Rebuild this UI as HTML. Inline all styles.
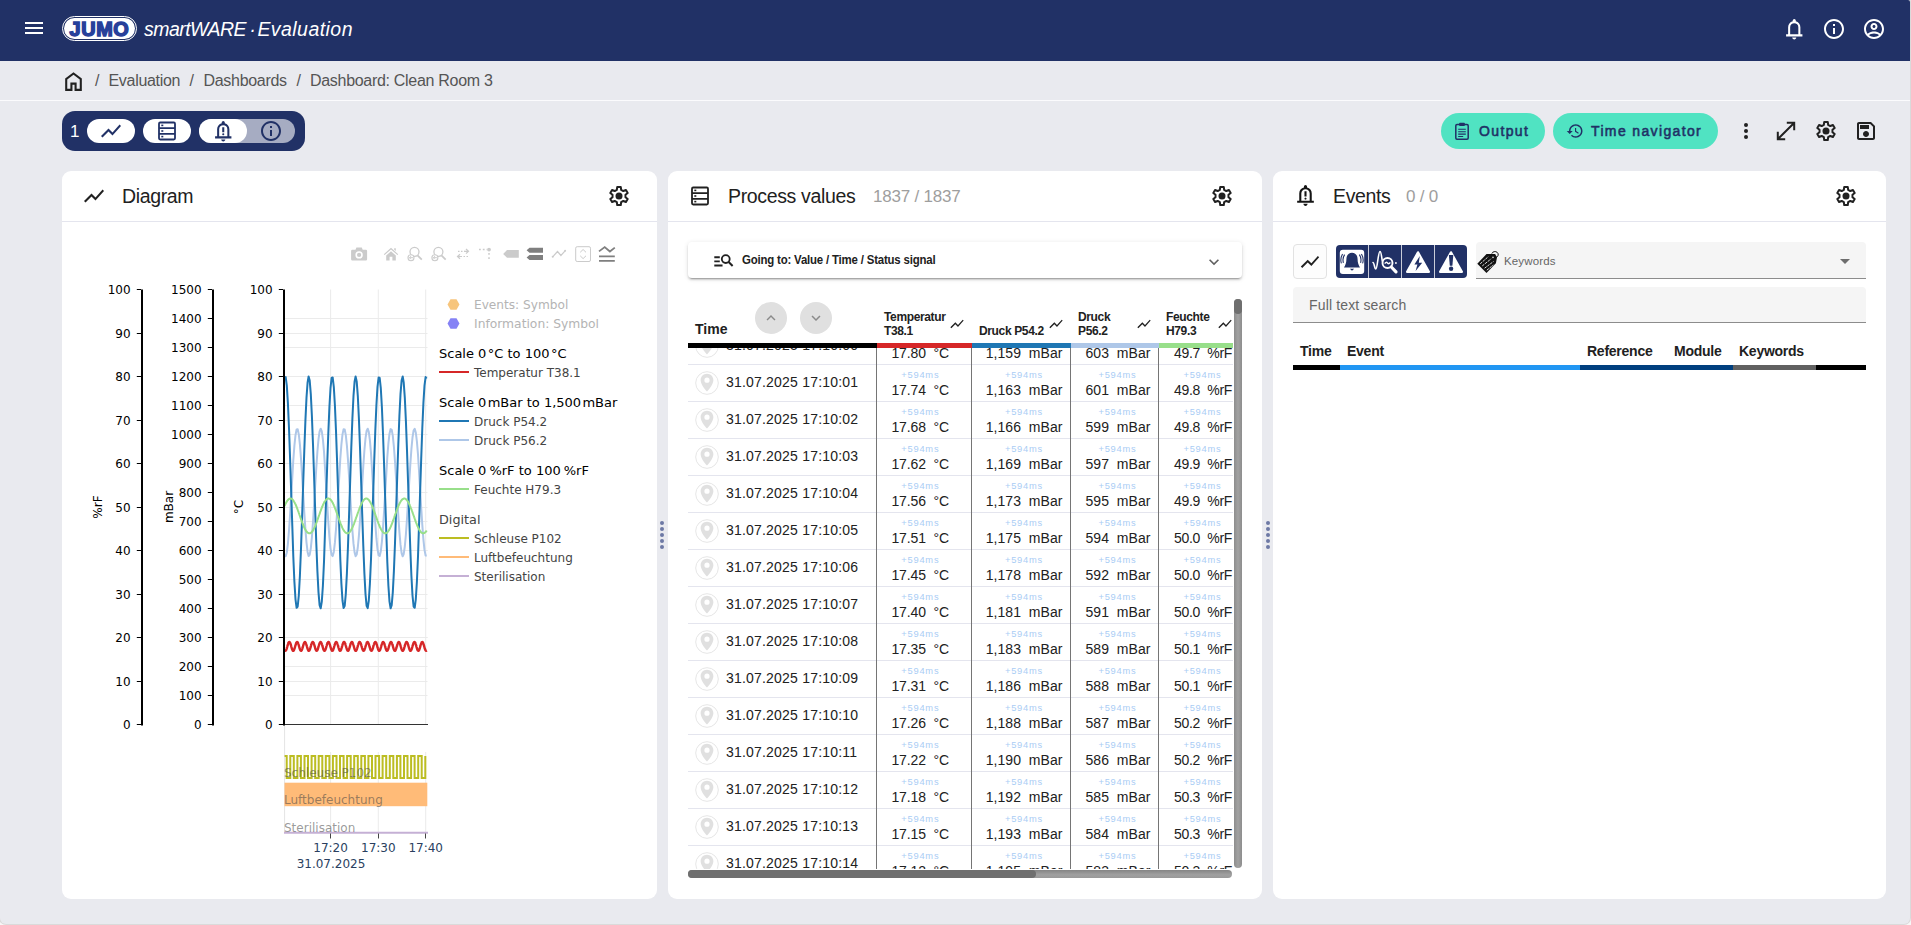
<!DOCTYPE html>
<html lang="en"><head><meta charset="utf-8"><title>JUMO smartWARE Evaluation</title>
<style>

*{box-sizing:border-box;margin:0;padding:0}
html,body{width:1911px;height:925px;overflow:hidden;background:#f7f7f7}
body{font-family:"Liberation Sans",sans-serif;color:#212121;position:relative}
#app{position:absolute;left:0;top:0;width:1910px;height:924px;background:#e9eaef;border-radius:0 2px 6px 6px;overflow:hidden}
#frame{position:absolute;left:-1px;top:-1px;width:1912px;height:926px;border-radius:0 3px 7px 7px;background:#dadada}
.abs{position:absolute}
.ic{position:absolute;display:block}
#hdr{position:absolute;left:0;top:0;width:1910px;height:61px;background:#213166}
#logo{position:absolute;left:62px;top:16px;width:75px;height:25px;border-radius:13px;border:1px solid #fff;background:#213166}
#logo i{position:absolute;left:1px;top:1px;right:1px;bottom:1px;border-radius:11px;background:#fff}
#logo b{position:absolute;left:0;top:0.5px;width:73px;height:23px;line-height:23px;text-align:center;color:#27409a;font-weight:bold;font-size:19.5px;letter-spacing:0.6px;-webkit-text-stroke:1.4px #27409a;transform:scaleX(1.02)}
.brand{position:absolute;left:144px;top:16px;height:26px;line-height:26px;color:#fff;font-style:italic;font-size:19.5px;white-space:nowrap;letter-spacing:-0.2px}
#crumb{position:absolute;left:0;top:61px;width:1910px;height:39px}
#crumb span{position:absolute;top:0;height:39px;line-height:39px;font-size:16px;color:#555;white-space:nowrap;letter-spacing:-0.3px}
#wline{position:absolute;left:0;top:100px;width:1910px;height:1px;background:#fbfbfd}
#pill{position:absolute;left:62px;top:111px;width:243px;height:40px;border-radius:13px;background:#213166}
#pill .n{position:absolute;left:8px;top:1px;height:40px;line-height:40px;color:#fff;font-size:17px}
#pill .t{position:absolute;top:8px;height:24px;border-radius:12px;background:#fff;color:#213166}
.btn{position:absolute;top:113px;height:36px;border-radius:18px;background:#50e3c2;color:#213166;font-size:14px;font-weight:normal;-webkit-text-stroke:0.55px #213166;letter-spacing:1.36px;line-height:36px;white-space:nowrap}
.card{position:absolute;top:171px;height:728px;background:#fff;border-radius:9px}
.card .hd{position:absolute;left:0;top:0;right:0;height:51px;border-bottom:1px solid #e4e5ee}
.card .ttl{position:absolute;top:0;height:50px;line-height:50px;font-size:19.500px;letter-spacing:-0.35px;color:#212121;white-space:nowrap}
.card .cnt{position:absolute;top:0;height:50px;line-height:51px;font-size:17px;letter-spacing:-0.2px;color:#9e9e9e;white-space:nowrap}
.grip{position:absolute;top:521px;width:4px;height:28px}
.grip i{position:absolute;left:0;width:4px;height:4px;border-radius:2px;background:#6d79a5}

.pg{position:absolute;width:1911px;height:925px}
.xp{position:absolute;background:#fff;border-radius:4px;box-shadow:0 3px 1px -2px rgba(0,0,0,.2),0 2px 2px 0 rgba(0,0,0,.14),0 1px 5px 0 rgba(0,0,0,.12)}
.xt{height:36px;line-height:37.6px;font-size:12.700px;font-weight:bold;color:#212121;white-space:nowrap;letter-spacing:-0.2px;transform:scaleX(0.9);transform-origin:0 50%}
.th14{font-size:14px;font-weight:bold;line-height:18px;color:#212121;white-space:nowrap}
.th12{font-size:12px;font-weight:bold;line-height:14px;color:#212121;white-space:nowrap;letter-spacing:-0.36px}
.cb{width:32px;height:32px;border-radius:16px;background:#e0e0e0}
.row{position:absolute;left:0;width:545px;height:37px;border-bottom:1px solid #e4e5ee}
.ts{height:36px;line-height:36px;font-size:14px;color:#212121;white-space:nowrap;letter-spacing:0.2px}
.ms{width:60px;text-align:center;font-size:9.300px;line-height:11px;color:#aacdf5;white-space:nowrap;letter-spacing:0.8px}
.val{font-size:14px;line-height:18px;color:#212121;white-space:nowrap;letter-spacing:-0.1px}

</style></head><body>
<div id="frame"></div>
<div id="app">

<div id="hdr">
<svg class="ic" viewBox="0 0 24 24" style="width:24px;height:24px;color:#fff;left:22px;top:16px" fill="currentColor"><path d="M3 18h18v-2H3v2zm0-5h18v-2H3v2zm0-7v2h18V6H3z"/></svg>
<div id="logo"><i></i><b>JUMO</b></div>
<div class="brand" style="letter-spacing:-0.55px">smartWARE</div><div class="brand" style="left:249.2px;letter-spacing:0">&middot;</div><div class="brand" style="left:257.4px;letter-spacing:0.45px">Evaluation</div>
<svg class="ic" viewBox="0 0 24 24" style="width:24.5px;height:24.5px;color:#fff;left:1781.700px;top:16.900px" fill="currentColor"><path d="M4 19v-2h2v-7q0-2.075 1.250-3.688T10.500 4.200V3.500q0-.625.438-1.062T12 2q.625 0 1.063.438T13.500 3.500v.700q2 .500 3.250 2.113T18 10v7h2v2H4Zm8 3q-.825 0-1.412-.587T10 20h4q0 .825-.587 1.413T12 22Zm-4-5h8v-7q0-1.650-1.175-2.825T12 6q-1.650 0-2.825 1.175T8 10v7Z"/></svg><svg class="ic" viewBox="0 0 24 24" style="width:24px;height:24px;color:#fff;left:1822px;top:17px" fill="currentColor"><path d="M11 7h2v2h-2zm0 4h2v6h-2zm1-9C6.480 2 2 6.480 2 12s4.480 10 10 10 10-4.480 10-10S17.520 2 12 2zm0 18c-4.410 0-8-3.590-8-8s3.590-8 8-8 8 3.590 8 8-3.590 8-8 8z"/></svg><svg class="ic" viewBox="0 0 24 24" style="width:24px;height:24px;color:#fff;left:1862px;top:17px" fill="currentColor"><path d="M12 2C6.480 2 2 6.480 2 12s4.480 10 10 10 10-4.480 10-10S17.520 2 12 2zM7.070 18.280c.430-.900 3.050-1.780 4.930-1.780s4.510.880 4.930 1.780C15.570 19.360 13.860 20 12 20s-3.570-.640-4.930-1.720zm11.290-1.450c-1.430-1.740-4.900-2.330-6.360-2.330s-4.930.590-6.360 2.330C4.620 15.490 4 13.820 4 12c0-4.410 3.590-8 8-8s8 3.590 8 8c0 1.820-.620 3.490-1.640 4.830zM12 6c-1.940 0-3.500 1.560-3.500 3.500S10.060 13 12 13s3.500-1.560 3.500-3.500S13.940 6 12 6zm0 5c-.830 0-1.500-.670-1.500-1.500S11.170 8 12 8s1.500.670 1.500 1.500S12.830 11 12 11z"/></svg>
</div>

<div id="crumb">
<svg class="ic" viewBox="0 0 24 24" style="width:25px;height:25px;color:#212121;left:61px;top:7.500px" fill="currentColor"><path d="M6 19h3v-6h6v6h3v-9l-6-4.500L6 10v9zm-2 2V9l8-6 8 6v12h-7v-6h-2v6H4z"/></svg>
<span style="left:95px">/</span><span style="left:108.500px">Evaluation</span>
<span style="left:189.500px">/</span><span style="left:203.500px">Dashboards</span>
<span style="left:296.500px">/</span><span style="left:310px">Dashboard: Clean Room 3</span>
</div>
<div id="wline"></div>

<div id="pill"><span class="n">1</span>
<div class="t" style="left:25px;width:48px"><svg class="ic" viewBox="0 0 24 24" style="width:24px;height:24px;left:12px;top:0" fill="currentColor"><path d="M3.5 18.490l6-6.010 4 4L22 6.920l-1.410-1.410-7.090 7.970-4-4L2 16.990z"/></svg></div>
<div class="t" style="left:81px;width:48px"><svg class="ic" viewBox="0 0 24 24" style="width:24px;height:24px;left:12px;top:0" fill="currentColor"><rect x="4" y="3.500" width="16" height="17" rx="1.200" fill="none" stroke="currentColor" stroke-width="1.800"/><path d="M4 9.200h16M4 14.800h16" fill="none" stroke="currentColor" stroke-width="1.800"/><rect x="6.300" y="5.600" width="2" height="1.600"/><rect x="6.300" y="11.200" width="2" height="1.600"/><rect x="6.300" y="16.800" width="2" height="1.600"/></svg></div>
<div class="t" style="left:137px;width:96px;background:rgba(255,255,255,.6)"><div class="t" style="left:0;top:0;width:48px"><svg class="ic" viewBox="0 0 24 24" style="width:24.5px;height:24.5px;left:11.800px;top:0" fill="currentColor"><path d="M4 19v-2h2v-7q0-2.075 1.250-3.688T10.500 4.200V3.500q0-.625.438-1.062T12 2q.625 0 1.063.438T13.500 3.500v.700q2 .500 3.250 2.113T18 10v7h2v2H4Zm8 3q-.825 0-1.412-.587T10 20h4q0 .825-.587 1.413T12 22Zm-4-5h8v-7q0-1.650-1.175-2.825T12 6q-1.650 0-2.825 1.175T8 10v7Zm3-4h2V8h-2v5Zm1 3q.425 0 .713-.288T13 15q0-.425-.288-.713T12 14q-.425 0-.713.288T11 15q0 .425.288.713T12 16Z"/></svg></div><svg class="ic" viewBox="0 0 24 24" style="width:24px;height:24px;left:60px;top:0" fill="currentColor"><path d="M11 7h2v2h-2zm0 4h2v6h-2zm1-9C6.480 2 2 6.480 2 12s4.480 10 10 10 10-4.480 10-10S17.520 2 12 2zm0 18c-4.410 0-8-3.590-8-8s3.590-8 8-8 8 3.590 8 8-3.590 8-8 8z"/></svg></div>
</div>

<div class="btn" style="left:1441px;width:104px"><svg class="ic" viewBox="0 0 14 18" style="left:14px;top:9px;width:14px;height:18px" fill="none" stroke="currentColor"><rect x="0.800" y="2.600" width="12.400" height="14.600" rx="1.200" stroke-width="1.500"/><rect x="4.200" y="0.700" width="5.600" height="3.200" rx="0.600" fill="currentColor" stroke="none"/><path d="M3.200 7.300h7.600M3.200 9.700h7.600M3.200 12.100h7.600M3.200 14.500h5" stroke-width="1.100"/></svg><span class="abs" style="left:38px">Output</span></div>
<div class="btn" style="left:1553px;width:165px"><svg class="ic" viewBox="0 0 24 24" style="width:18px;height:18px;left:12.500px;top:9px" fill="currentColor"><path d="M13 3c-4.970 0-9 4.030-9 9H1l3.890 3.890.070.140L9 12H6c0-3.870 3.130-7 7-7s7 3.130 7 7-3.130 7-7 7c-1.930 0-3.680-.790-4.940-2.060l-1.420 1.420C8.270 19.990 10.510 21 13 21c4.970 0 9-4.030 9-9s-4.030-9-9-9zm-1 5v5l4.250 2.520.770-1.280-3.520-2.090V8z"/></svg><span class="abs" style="left:38px">Time navigator</span></div>
<svg class="ic" viewBox="0 0 24 24" style="width:24px;height:24px;color:#212121;left:1734px;top:119px" fill="currentColor"><circle cx="12" cy="6" r="2"/><circle cx="12" cy="12" r="2"/><circle cx="12" cy="18" r="2"/></svg><svg class="ic" viewBox="0 0 24 24" style="width:24px;height:24px;color:#212121;left:1774px;top:119px" fill="currentColor"><path d="M12.800 3.800H20.200V11.200M3.800 12.800V20.200H11.200M19.800 4.200L4.200 19.800" fill="none" stroke="currentColor" stroke-width="2"/></svg><svg class="ic" viewBox="0 0 24 24" style="width:24px;height:24px;color:#212121;left:1814px;top:119px" fill="currentColor"><path d="M14.15 5.76L13.76 2.97L10.24 2.97L9.85 5.76L7.67 7.02L5.06 5.96L3.30 9.00L5.52 10.74L5.52 13.26L3.30 15.00L5.06 18.04L7.67 16.98L9.85 18.24L10.24 21.03L13.76 21.03L14.15 18.24L16.33 16.98L18.94 18.04L20.70 15.00L18.48 13.26L18.48 10.74L20.70 9.00L18.94 5.96L16.33 7.02Z" fill="none" stroke="currentColor" stroke-width="2" stroke-linejoin="round"/><circle cx="12" cy="12" r="3.500"/></svg><svg class="ic" viewBox="0 0 24 24" style="width:24px;height:24px;color:#212121;left:1854px;top:119px" fill="currentColor"><path d="M17 3H5c-1.110 0-2 .900-2 2v14c0 1.100.890 2 2 2h14c1.100 0 2-.900 2-2V7l-4-4zm2 16H5V5h11.170L19 7.830V19zm-7-7c-1.660 0-3 1.340-3 3s1.340 3 3 3 3-1.340 3-3-1.340-3-3-3zM6 6h9v4H6z"/></svg>

<div class="card" id="c1" style="left:62px;width:595px">
<div class="hd"><svg class="ic" viewBox="0 0 24 24" style="width:24px;height:24px;color:#212121;left:20px;top:13px" fill="currentColor"><path d="M3.5 18.490l6-6.010 4 4L22 6.920l-1.410-1.410-7.090 7.970-4-4L2 16.990z"/></svg><span class="ttl" style="left:60px">Diagram</span><svg class="ic" viewBox="0 0 24 24" style="width:24px;height:24px;color:#212121;left:545px;top:13px" fill="currentColor"><path d="M14.15 5.76L13.76 2.97L10.24 2.97L9.85 5.76L7.67 7.02L5.06 5.96L3.30 9.00L5.52 10.74L5.52 13.26L3.30 15.00L5.06 18.04L7.67 16.98L9.85 18.24L10.24 21.03L13.76 21.03L14.15 18.24L16.33 16.98L18.94 18.04L20.70 15.00L18.48 13.26L18.48 10.74L20.70 9.00L18.94 5.96L16.33 7.02Z" fill="none" stroke="currentColor" stroke-width="2" stroke-linejoin="round"/><circle cx="12" cy="12" r="3.500"/></svg></div>
<svg class="abs" style="left:0;top:0;width:595px;height:728px" viewBox="62 171 595 728" font-family="'DejaVu Sans',Verdana,sans-serif" font-size="12">
<path d="M285 695.5H427.5M285 666.5H427.5M285 637.5H427.5M285 608.5H427.5M285 579.5H427.5M285 550.5H427.5M285 521.5H427.5M285 492.5H427.5M285 463.5H427.5M285 434.5H427.5M285 405.5H427.5M285 376.5H427.5M285 347.5H427.5M285 318.5H427.5M285 681.5H427.5M285 637.5H427.5M285 594.5H427.5M285 550.5H427.5M285 507.5H427.5M285 463.5H427.5M285 420.5H427.5M285 376.5H427.5M285 333.5H427.5" stroke="#ebebeb" stroke-width="1" fill="none"/>
<path d="M330.6 289.5V724.5M330.6 752V833M378.3 289.5V724.5M378.3 752V833M425.7 289.5V724.5M425.7 752V833" stroke="#ebebeb" stroke-width="1" fill="none"/>
<path d="M284.6 724V833" stroke="#e4e4e4" stroke-width="1" fill="none"/>
<path d="M284.6 554.5L285.7 556.2L286.8 552.5L287.9 543.8L289.0 530.6L290.1 514.2L291.2 496.0L292.3 477.4L293.3 460.2L294.4 445.7L295.5 435.2L296.6 429.5L297.7 429.3L298.8 434.4L299.9 444.4L301.0 458.6L302.1 475.6L303.2 494.1L304.3 512.5L305.4 529.1L306.5 542.6L307.6 551.9L308.6 556.1L309.7 554.9L310.8 548.3L311.9 537.1L313.0 522.0L314.1 504.4L315.2 485.8L316.3 467.8L317.4 451.8L318.5 439.4L319.6 431.4L320.7 428.7L321.8 431.4L322.9 439.3L324.0 451.7L325.0 467.6L326.1 485.7L327.2 504.3L328.3 521.9L329.4 537.0L330.5 548.3L331.6 554.8L332.7 556.1L333.8 551.9L334.9 542.7L336.0 529.2L337.1 512.6L338.2 494.2L339.3 475.8L340.3 458.7L341.4 444.5L342.5 434.4L343.6 429.3L344.7 429.5L345.8 435.1L346.9 445.6L348.0 460.1L349.1 477.3L350.2 495.9L351.3 514.1L352.4 530.5L353.5 543.7L354.6 552.5L355.6 556.2L356.7 554.5L357.8 547.5L358.9 535.8L360.0 520.4L361.1 502.7L362.2 484.0L363.3 466.1L364.4 450.5L365.5 438.4L366.6 431.0L367.7 428.7L368.8 431.9L369.9 440.3L371.0 453.1L372.0 469.3L373.1 487.4L374.2 506.0L375.3 523.4L376.4 538.2L377.5 549.1L378.6 555.2L379.7 555.9L380.8 551.3L381.9 541.6L383.0 527.8L384.1 510.9L385.2 492.5L386.3 474.1L387.3 457.2L388.4 443.4L389.5 433.7L390.6 429.1L391.7 429.8L392.8 435.9L393.9 446.8L395.0 461.6L396.1 479.0L397.2 497.6L398.3 515.8L399.4 531.9L400.5 544.7L401.6 553.1L402.7 556.3L403.7 554.0L404.8 546.6L405.9 534.5L407.0 518.8L408.1 500.9L409.2 482.3L410.3 464.6L411.4 449.2L412.5 437.5L413.6 430.5L414.7 428.8L415.8 432.5L416.9 441.3L418.0 454.5L419.0 470.9L420.1 489.2L421.2 507.7L422.3 524.9L423.4 539.4L424.5 549.9L425.6 555.5L426.7 555.7" stroke="#aec7e8" stroke-width="2" fill="none" stroke-linejoin="round"/>
<path d="M284.6 378.5L285.7 377.1L286.8 385.6L287.9 403.1L289.0 428.3L290.1 458.9L291.2 492.4L292.3 525.9L293.3 556.5L294.4 581.7L295.5 599.3L296.6 607.8L297.7 606.5L298.8 595.5L299.9 575.7L301.0 548.8L302.1 517.1L303.2 483.3L304.3 450.4L305.4 420.9L306.5 397.6L307.6 382.4L308.6 376.5L309.7 380.6L310.8 394.1L311.9 416.0L313.0 444.5L314.1 477.0L315.2 510.9L316.3 543.2L317.4 571.1L318.5 592.4L319.6 605.2L320.7 608.3L321.8 601.6L322.9 585.7L324.0 561.7L325.0 531.9L326.1 498.7L327.2 465.0L328.3 433.7L329.4 407.3L330.5 388.2L331.6 378.0L332.7 377.5L333.8 386.8L334.9 405.2L336.0 430.9L337.1 461.9L338.2 495.6L339.3 528.9L340.3 559.2L341.4 583.7L342.5 600.5L343.6 608.1L344.7 605.9L345.8 594.0L346.9 573.4L348.0 546.0L349.1 514.0L350.2 480.2L351.3 447.4L352.4 418.5L353.5 395.8L354.6 381.4L355.6 376.5L356.7 381.4L357.8 395.8L358.9 418.5L360.0 447.4L361.1 480.2L362.2 514.0L363.3 546.0L364.4 573.4L365.5 594.0L366.6 605.9L367.7 608.1L368.8 600.5L369.9 583.7L371.0 559.2L372.0 528.9L373.1 495.6L374.2 461.9L375.3 430.9L376.4 405.2L377.5 386.8L378.6 377.5L379.7 378.0L380.8 388.2L381.9 407.3L383.0 433.7L384.1 465.0L385.2 498.7L386.3 531.9L387.3 561.7L388.4 585.7L389.5 601.6L390.6 608.3L391.7 605.2L392.8 592.4L393.9 571.1L395.0 543.2L396.1 510.9L397.2 477.0L398.3 444.5L399.4 416.0L400.5 394.1L401.6 380.6L402.7 376.5L403.7 382.4L404.8 397.6L405.9 420.9L407.0 450.4L408.1 483.3L409.2 517.1L410.3 548.8L411.4 575.7L412.5 595.5L413.6 606.5L414.7 607.8L415.8 599.3L416.9 581.7L418.0 556.5L419.0 525.9L420.1 492.4L421.2 458.9L422.3 428.3L423.4 403.1L424.5 385.6L425.6 377.1L426.7 378.5" stroke="#1f77b4" stroke-width="2" fill="none" stroke-linejoin="round"/>
<path d="M284.6 505.9L284.8 505.6L284.9 505.2L285.1 504.9L285.2 504.5L285.4 504.2L285.5 503.8L285.7 503.5L285.9 503.2L286.0 502.9L286.2 502.6L286.3 502.3L286.5 502.0L286.7 501.8L286.8 501.5L287.0 501.3L287.1 501.0L287.3 500.8L287.4 500.6L287.6 500.4L287.8 500.2L287.9 500.0L288.1 499.8L288.2 499.6L288.4 499.5L288.5 499.3L288.7 499.2L288.9 499.1L289.0 499.0L289.2 498.9L289.3 498.8L289.5 498.7L289.7 498.7L289.8 498.6L290.0 498.6L290.1 498.5L290.3 498.5L290.4 498.5L290.6 498.5L290.8 498.5L290.9 498.6L291.1 498.6L291.2 498.7L291.4 498.8L291.5 498.8L291.7 498.9L291.9 499.0L292.0 499.1L292.2 499.3L292.3 499.4L292.5 499.6L292.7 499.7L292.8 499.9L293.0 500.1L293.1 500.3L293.3 500.5L293.4 500.7L293.6 500.9L293.8 501.1L293.9 501.4L294.1 501.6L294.2 501.9L294.4 502.2L294.5 502.5L294.7 502.8L294.9 503.1L295.0 503.4L295.2 503.7L295.3 504.0L295.5 504.3L295.7 504.7L295.8 505.0L296.0 505.4L296.1 505.8L296.3 506.1L296.4 506.5L296.6 506.9L296.8 507.3L296.9 507.7L297.1 508.1L297.2 508.5L297.4 508.9L297.5 509.3L297.7 509.8L297.9 510.2L298.0 510.6L298.2 511.1L298.3 511.5L298.5 511.9L298.7 512.4L298.8 512.8L299.0 513.3L299.1 513.7L299.3 514.2L299.4 514.6L299.6 515.1L299.8 515.5L299.9 516.0L300.1 516.5L300.2 516.9L300.4 517.4L300.5 517.8L300.7 518.3L300.9 518.7L301.0 519.2L301.2 519.6L301.3 520.1L301.5 520.5L301.7 520.9L301.8 521.4L302.0 521.8L302.1 522.2L302.3 522.6L302.4 523.1L302.6 523.5L302.8 523.9L302.9 524.3L303.1 524.7L303.2 525.1L303.4 525.4L303.5 525.8L303.7 526.2L303.9 526.6L304.0 526.9L304.2 527.3L304.3 527.6L304.5 527.9L304.7 528.3L304.8 528.6L305.0 528.9L305.1 529.2L305.3 529.5L305.4 529.8L305.6 530.0L305.8 530.3L305.9 530.5L306.1 530.8L306.2 531.0L306.4 531.2L306.5 531.4L306.7 531.6L306.9 531.8L307.0 532.0L307.2 532.2L307.3 532.3L307.5 532.5L307.7 532.6L307.8 532.7L308.0 532.8L308.1 532.9L308.3 533.0L308.4 533.1L308.6 533.2L308.8 533.2L308.9 533.3L309.1 533.3L309.2 533.3L309.4 533.3L309.5 533.3L309.7 533.3L309.9 533.3L310.0 533.2L310.2 533.2L310.3 533.1L310.5 533.0L310.7 532.9L310.8 532.8L311.0 532.7L311.1 532.6L311.3 532.5L311.4 532.3L311.6 532.2L311.8 532.0L311.9 531.8L312.1 531.6L312.2 531.4L312.4 531.2L312.5 531.0L312.7 530.7L312.9 530.5L313.0 530.2L313.2 530.0L313.3 529.7L313.5 529.4L313.7 529.1L313.8 528.8L314.0 528.5L314.1 528.2L314.3 527.9L314.4 527.5L314.6 527.2L314.8 526.9L314.9 526.5L315.1 526.1L315.2 525.8L315.4 525.4L315.5 525.0L315.7 524.6L315.9 524.2L316.0 523.8L316.2 523.4L316.3 523.0L316.5 522.6L316.7 522.1L316.8 521.7L317.0 521.3L317.1 520.9L317.3 520.4L317.4 520.0L317.6 519.5L317.8 519.1L317.9 518.6L318.1 518.2L318.2 517.7L318.4 517.3L318.5 516.8L318.7 516.4L318.9 515.9L319.0 515.5L319.2 515.0L319.3 514.6L319.5 514.1L319.7 513.7L319.8 513.2L320.0 512.8L320.1 512.3L320.3 511.9L320.4 511.4L320.6 511.0L320.8 510.6L320.9 510.1L321.1 509.7L321.2 509.3L321.4 508.9L321.5 508.4L321.7 508.0L321.9 507.6L322.0 507.2L322.2 506.8L322.3 506.5L322.5 506.1L322.7 505.7L322.8 505.3L323.0 505.0L323.1 504.6L323.3 504.3L323.4 504.0L323.6 503.6L323.8 503.3L323.9 503.0L324.1 502.7L324.2 502.4L324.4 502.1L324.5 501.9L324.7 501.6L324.9 501.3L325.0 501.1L325.2 500.9L325.3 500.6L325.5 500.4L325.7 500.2L325.8 500.0L326.0 499.9L326.1 499.7L326.3 499.5L326.4 499.4L326.6 499.2L326.8 499.1L326.9 499.0L327.1 498.9L327.2 498.8L327.4 498.7L327.5 498.7L327.7 498.6L327.9 498.6L328.0 498.5L328.2 498.5L328.3 498.5L328.5 498.5L328.7 498.5L328.8 498.6L329.0 498.6L329.1 498.7L329.3 498.7L329.4 498.8L329.6 498.9L329.8 499.0L329.9 499.1L330.1 499.2L330.2 499.4L330.4 499.5L330.5 499.7L330.7 499.8L330.9 500.0L331.0 500.2L331.2 500.4L331.3 500.6L331.5 500.8L331.7 501.1L331.8 501.3L332.0 501.5L332.1 501.8L332.3 502.1L332.4 502.4L332.6 502.6L332.8 502.9L332.9 503.3L333.1 503.6L333.2 503.9L333.4 504.2L333.5 504.6L333.7 504.9L333.9 505.3L334.0 505.6L334.2 506.0L334.3 506.4L334.5 506.8L334.7 507.2L334.8 507.6L335.0 508.0L335.1 508.4L335.3 508.8L335.4 509.2L335.6 509.6L335.8 510.0L335.9 510.5L336.1 510.9L336.2 511.3L336.4 511.8L336.5 512.2L336.7 512.7L336.9 513.1L337.0 513.6L337.2 514.0L337.3 514.5L337.5 514.9L337.7 515.4L337.8 515.8L338.0 516.3L338.1 516.7L338.3 517.2L338.4 517.7L338.6 518.1L338.8 518.6L338.9 519.0L339.1 519.4L339.2 519.9L339.4 520.3L339.5 520.8L339.7 521.2L339.9 521.6L340.0 522.1L340.2 522.5L340.3 522.9L340.5 523.3L340.7 523.7L340.8 524.1L341.0 524.5L341.1 524.9L341.3 525.3L341.4 525.7L341.6 526.1L341.8 526.4L341.9 526.8L342.1 527.1L342.2 527.5L342.4 527.8L342.5 528.1L342.7 528.5L342.9 528.8L343.0 529.1L343.2 529.4L343.3 529.7L343.5 529.9L343.7 530.2L343.8 530.5L344.0 530.7L344.1 530.9L344.3 531.2L344.4 531.4L344.6 531.6L344.8 531.8L344.9 531.9L345.1 532.1L345.2 532.3L345.4 532.4L345.5 532.6L345.7 532.7L345.9 532.8L346.0 532.9L346.2 533.0L346.3 533.1L346.5 533.2L346.7 533.2L346.8 533.3L347.0 533.3L347.1 533.3L347.3 533.3L347.4 533.3L347.6 533.3L347.8 533.3L347.9 533.2L348.1 533.2L348.2 533.1L348.4 533.0L348.5 533.0L348.7 532.9L348.9 532.8L349.0 532.6L349.2 532.5L349.3 532.4L349.5 532.2L349.7 532.0L349.8 531.9L350.0 531.7L350.1 531.5L350.3 531.3L350.4 531.1L350.6 530.8L350.8 530.6L350.9 530.3L351.1 530.1L351.2 529.8L351.4 529.5L351.5 529.2L351.7 528.9L351.9 528.6L352.0 528.3L352.2 528.0L352.3 527.7L352.5 527.3L352.7 527.0L352.8 526.6L353.0 526.3L353.1 525.9L353.3 525.5L353.4 525.1L353.6 524.7L353.8 524.4L353.9 524.0L354.1 523.5L354.2 523.1L354.4 522.7L354.5 522.3L354.7 521.9L354.9 521.4L355.0 521.0L355.2 520.6L355.3 520.1L355.5 519.7L355.6 519.2L355.8 518.8L356.0 518.3L356.1 517.9L356.3 517.4L356.4 517.0L356.6 516.5L356.8 516.1L356.9 515.6L357.1 515.2L357.2 514.7L357.4 514.3L357.5 513.8L357.7 513.4L357.9 512.9L358.0 512.5L358.2 512.0L358.3 511.6L358.5 511.1L358.6 510.7L358.8 510.3L359.0 509.8L359.1 509.4L359.3 509.0L359.4 508.6L359.6 508.2L359.8 507.8L359.9 507.4L360.1 507.0L360.2 506.6L360.4 506.2L360.5 505.8L360.7 505.5L360.9 505.1L361.0 504.8L361.2 504.4L361.3 504.1L361.5 503.7L361.6 503.4L361.8 503.1L362.0 502.8L362.1 502.5L362.3 502.2L362.4 502.0L362.6 501.7L362.8 501.4L362.9 501.2L363.1 500.9L363.2 500.7L363.4 500.5L363.5 500.3L363.7 500.1L363.9 499.9L364.0 499.7L364.2 499.6L364.3 499.4L364.5 499.3L364.6 499.2L364.8 499.0L365.0 498.9L365.1 498.8L365.3 498.8L365.4 498.7L365.6 498.6L365.8 498.6L365.9 498.6L366.1 498.5L366.2 498.5L366.4 498.5L366.5 498.5L366.7 498.6L366.9 498.6L367.0 498.6L367.2 498.7L367.3 498.8L367.5 498.9L367.6 499.0L367.8 499.1L368.0 499.2L368.1 499.3L368.3 499.4L368.4 499.6L368.6 499.8L368.8 499.9L368.9 500.1L369.1 500.3L369.2 500.5L369.4 500.7L369.5 501.0L369.7 501.2L369.9 501.5L370.0 501.7L370.2 502.0L370.3 502.3L370.5 502.5L370.6 502.8L370.8 503.1L371.0 503.5L371.1 503.8L371.3 504.1L371.4 504.4L371.6 504.8L371.8 505.1L371.9 505.5L372.1 505.9L372.2 506.2L372.4 506.6L372.5 507.0L372.7 507.4L372.9 507.8L373.0 508.2L373.2 508.6L373.3 509.0L373.5 509.5L373.6 509.9L373.8 510.3L374.0 510.7L374.1 511.2L374.3 511.6L374.4 512.1L374.6 512.5L374.8 513.0L374.9 513.4L375.1 513.9L375.2 514.3L375.4 514.8L375.5 515.2L375.7 515.7L375.9 516.1L376.0 516.6L376.2 517.0L376.3 517.5L376.5 517.9L376.6 518.4L376.8 518.8L377.0 519.3L377.1 519.7L377.3 520.2L377.4 520.6L377.6 521.1L377.8 521.5L377.9 521.9L378.1 522.3L378.2 522.8L378.4 523.2L378.5 523.6L378.7 524.0L378.9 524.4L379.0 524.8L379.2 525.2L379.3 525.6L379.5 525.9L379.6 526.3L379.8 526.7L380.0 527.0L380.1 527.4L380.3 527.7L380.4 528.0L380.6 528.4L380.8 528.7L380.9 529.0L381.1 529.3L381.2 529.6L381.4 529.8L381.5 530.1L381.7 530.4L381.9 530.6L382.0 530.8L382.2 531.1L382.3 531.3L382.5 531.5L382.6 531.7L382.8 531.9L383.0 532.1L383.1 532.2L383.3 532.4L383.4 532.5L383.6 532.6L383.8 532.8L383.9 532.9L384.1 533.0L384.2 533.1L384.4 533.1L384.5 533.2L384.7 533.2L384.9 533.3L385.0 533.3L385.2 533.3L385.3 533.3L385.5 533.3L385.6 533.3L385.8 533.3L386.0 533.2L386.1 533.1L386.3 533.1L386.4 533.0L386.6 532.9L386.8 532.8L386.9 532.7L387.1 532.6L387.2 532.4L387.4 532.3L387.5 532.1L387.7 531.9L387.9 531.7L388.0 531.6L388.2 531.3L388.3 531.1L388.5 530.9L388.6 530.7L388.8 530.4L389.0 530.2L389.1 529.9L389.3 529.6L389.4 529.3L389.6 529.1L389.8 528.7L389.9 528.4L390.1 528.1L390.2 527.8L390.4 527.5L390.5 527.1L390.7 526.8L390.9 526.4L391.0 526.0L391.2 525.7L391.3 525.3L391.5 524.9L391.6 524.5L391.8 524.1L392.0 523.7L392.1 523.3L392.3 522.9L392.4 522.4L392.6 522.0L392.8 521.6L392.9 521.2L393.1 520.7L393.2 520.3L393.4 519.9L393.5 519.4L393.7 519.0L393.9 518.5L394.0 518.1L394.2 517.6L394.3 517.2L394.5 516.7L394.6 516.2L394.8 515.8L395.0 515.3L395.1 514.9L395.3 514.4L395.4 514.0L395.6 513.5L395.8 513.1L395.9 512.6L396.1 512.2L396.2 511.7L396.4 511.3L396.5 510.9L396.7 510.4L396.9 510.0L397.0 509.6L397.2 509.2L397.3 508.7L397.5 508.3L397.6 507.9L397.8 507.5L398.0 507.1L398.1 506.7L398.3 506.3L398.4 506.0L398.6 505.6L398.8 505.2L398.9 504.9L399.1 504.5L399.2 504.2L399.4 503.9L399.5 503.5L399.7 503.2L399.9 502.9L400.0 502.6L400.2 502.3L400.3 502.1L400.5 501.8L400.6 501.5L400.8 501.3L401.0 501.0L401.1 500.8L401.3 500.6L401.4 500.4L401.6 500.2L401.8 500.0L401.9 499.8L402.1 499.6L402.2 499.5L402.4 499.3L402.5 499.2L402.7 499.1L402.9 499.0L403.0 498.9L403.2 498.8L403.3 498.7L403.5 498.7L403.6 498.6L403.8 498.6L404.0 498.5L404.1 498.5L404.3 498.5L404.4 498.5L404.6 498.5L404.8 498.6L404.9 498.6L405.1 498.7L405.2 498.7L405.4 498.8L405.5 498.9L405.7 499.0L405.9 499.1L406.0 499.3L406.2 499.4L406.3 499.5L406.5 499.7L406.6 499.9L406.8 500.1L407.0 500.2L407.1 500.4L407.3 500.7L407.4 500.9L407.6 501.1L407.8 501.4L407.9 501.6L408.1 501.9L408.2 502.2L408.4 502.4L408.5 502.7L408.7 503.0L408.9 503.3L409.0 503.7L409.2 504.0L409.3 504.3L409.5 504.7L409.6 505.0L409.8 505.4L410.0 505.7L410.1 506.1L410.3 506.5L410.4 506.9L410.6 507.3L410.8 507.7L410.9 508.1L411.1 508.5L411.2 508.9L411.4 509.3L411.5 509.7L411.7 510.2L411.9 510.6L412.0 511.0L412.2 511.5L412.3 511.9L412.5 512.3L412.6 512.8L412.8 513.2L413.0 513.7L413.1 514.1L413.3 514.6L413.4 515.1L413.6 515.5L413.8 516.0L413.9 516.4L414.1 516.9L414.2 517.3L414.4 517.8L414.5 518.2L414.7 518.7L414.9 519.1L415.0 519.6L415.2 520.0L415.3 520.5L415.5 520.9L415.6 521.3L415.8 521.8L416.0 522.2L416.1 522.6L416.3 523.0L416.4 523.4L416.6 523.8L416.8 524.2L416.9 524.6L417.1 525.0L417.2 525.4L417.4 525.8L417.5 526.2L417.7 526.5L417.9 526.9L418.0 527.2L418.2 527.6L418.3 527.9L418.5 528.2L418.6 528.6L418.8 528.9L419.0 529.2L419.1 529.5L419.3 529.7L419.4 530.0L419.6 530.3L419.8 530.5L419.9 530.8L420.1 531.0L420.2 531.2L420.4 531.4L420.5 531.6L420.7 531.8L420.9 532.0L421.0 532.2L421.2 532.3L421.3 532.5L421.5 532.6L421.6 532.7L421.8 532.8L422.0 532.9L422.1 533.0L422.3 533.1L422.4 533.2L422.6 533.2L422.8 533.3L422.9 533.3L423.1 533.3L423.2 533.3L423.4 533.3L423.5 533.3L423.7 533.3L423.9 533.2L424.0 533.2L424.2 533.1L424.3 533.0L424.5 532.9L424.6 532.8L424.8 532.7L425.0 532.6L425.1 532.5L425.3 532.3L425.4 532.2L425.6 532.0L425.8 531.8L425.9 531.6L426.1 531.4L426.2 531.2L426.4 531.0L426.5 530.8L426.7 530.5" stroke="#98df8a" stroke-width="2" fill="none" stroke-linejoin="round"/>
<path d="M284.6 650.0L284.8 650.3L284.9 650.5L285.1 650.7L285.2 650.8L285.4 650.8L285.5 650.8L285.7 650.7L285.9 650.5L286.0 650.3L286.2 650.0L286.3 649.6L286.5 649.2L286.7 648.8L286.8 648.3L287.0 647.7L287.1 647.2L287.3 646.6L287.4 646.1L287.6 645.5L287.8 645.0L287.9 644.4L288.1 643.9L288.2 643.5L288.4 643.1L288.5 642.7L288.7 642.4L288.9 642.2L289.0 642.1L289.2 642.0L289.3 642.0L289.5 642.0L289.7 642.1L289.8 642.3L290.0 642.6L290.1 642.9L290.3 643.3L290.4 643.7L290.6 644.2L290.8 644.7L290.9 645.2L291.1 645.8L291.2 646.3L291.4 646.9L291.5 647.4L291.7 648.0L291.9 648.5L292.0 649.0L292.2 649.4L292.3 649.8L292.5 650.1L292.7 650.4L292.8 650.6L293.0 650.8L293.1 650.8L293.3 650.8L293.4 650.8L293.6 650.6L293.8 650.4L293.9 650.2L294.1 649.8L294.2 649.4L294.4 649.0L294.5 648.5L294.7 648.0L294.9 647.5L295.0 646.9L295.2 646.4L295.3 645.8L295.5 645.2L295.7 644.7L295.8 644.2L296.0 643.7L296.1 643.3L296.3 642.9L296.4 642.6L296.6 642.3L296.8 642.1L296.9 642.0L297.1 642.0L297.2 642.0L297.4 642.1L297.5 642.2L297.7 642.4L297.9 642.7L298.0 643.1L298.2 643.5L298.3 643.9L298.5 644.4L298.7 644.9L298.8 645.5L299.0 646.0L299.1 646.6L299.3 647.1L299.4 647.7L299.6 648.2L299.8 648.7L299.9 649.2L300.1 649.6L300.2 650.0L300.4 650.3L300.5 650.5L300.7 650.7L300.9 650.8L301.0 650.8L301.2 650.8L301.3 650.7L301.5 650.5L301.7 650.3L301.8 650.0L302.0 649.6L302.1 649.2L302.3 648.8L302.4 648.3L302.6 647.8L302.8 647.2L302.9 646.6L303.1 646.1L303.2 645.5L303.4 645.0L303.5 644.5L303.7 644.0L303.9 643.5L304.0 643.1L304.2 642.8L304.3 642.5L304.5 642.2L304.7 642.1L304.8 642.0L305.0 642.0L305.1 642.0L305.3 642.1L305.4 642.3L305.6 642.6L305.8 642.9L305.9 643.2L306.1 643.7L306.2 644.1L306.4 644.6L306.5 645.2L306.7 645.7L306.9 646.3L307.0 646.8L307.2 647.4L307.3 647.9L307.5 648.5L307.7 648.9L307.8 649.4L308.0 649.8L308.1 650.1L308.3 650.4L308.4 650.6L308.6 650.8L308.8 650.8L308.9 650.8L309.1 650.8L309.2 650.6L309.4 650.4L309.5 650.2L309.7 649.8L309.9 649.5L310.0 649.0L310.2 648.5L310.3 648.0L310.5 647.5L310.7 646.9L310.8 646.4L311.0 645.8L311.1 645.3L311.3 644.7L311.4 644.2L311.6 643.7L311.8 643.3L311.9 642.9L312.1 642.6L312.2 642.3L312.4 642.1L312.5 642.0L312.7 642.0L312.9 642.0L313.0 642.0L313.2 642.2L313.3 642.4L313.5 642.7L313.7 643.0L313.8 643.4L314.0 643.9L314.1 644.4L314.3 644.9L314.4 645.4L314.6 646.0L314.8 646.5L314.9 647.1L315.1 647.7L315.2 648.2L315.4 648.7L315.5 649.2L315.7 649.6L315.9 649.9L316.0 650.3L316.2 650.5L316.3 650.7L316.5 650.8L316.7 650.8L316.8 650.8L317.0 650.7L317.1 650.6L317.3 650.3L317.4 650.0L317.6 649.7L317.8 649.3L317.9 648.8L318.1 648.3L318.2 647.8L318.4 647.2L318.5 646.7L318.7 646.1L318.9 645.6L319.0 645.0L319.2 644.5L319.3 644.0L319.5 643.5L319.7 643.1L319.8 642.8L320.0 642.5L320.1 642.2L320.3 642.1L320.4 642.0L320.6 642.0L320.8 642.0L320.9 642.1L321.1 642.3L321.2 642.5L321.4 642.9L321.5 643.2L321.7 643.6L321.9 644.1L322.0 644.6L322.2 645.1L322.3 645.7L322.5 646.3L322.7 646.8L322.8 647.4L323.0 647.9L323.1 648.4L323.3 648.9L323.4 649.4L323.6 649.8L323.8 650.1L323.9 650.4L324.1 650.6L324.2 650.8L324.4 650.8L324.5 650.8L324.7 650.8L324.9 650.7L325.0 650.5L325.2 650.2L325.3 649.9L325.5 649.5L325.7 649.0L325.8 648.6L326.0 648.1L326.1 647.5L326.3 647.0L326.4 646.4L326.6 645.9L326.8 645.3L326.9 644.8L327.1 644.3L327.2 643.8L327.4 643.3L327.5 643.0L327.7 642.6L327.9 642.4L328.0 642.2L328.2 642.0L328.3 642.0L328.5 642.0L328.7 642.0L328.8 642.2L329.0 642.4L329.1 642.7L329.3 643.0L329.4 643.4L329.6 643.9L329.8 644.3L329.9 644.9L330.1 645.4L330.2 646.0L330.4 646.5L330.5 647.1L330.7 647.6L330.9 648.2L331.0 648.7L331.2 649.1L331.3 649.6L331.5 649.9L331.7 650.2L331.8 650.5L332.0 650.7L332.1 650.8L332.3 650.8L332.4 650.8L332.6 650.7L332.8 650.6L332.9 650.3L333.1 650.0L333.2 649.7L333.4 649.3L333.5 648.8L333.7 648.3L333.9 647.8L334.0 647.3L334.2 646.7L334.3 646.1L334.5 645.6L334.7 645.0L334.8 644.5L335.0 644.0L335.1 643.6L335.3 643.2L335.4 642.8L335.6 642.5L335.8 642.3L335.9 642.1L336.1 642.0L336.2 642.0L336.4 642.0L336.5 642.1L336.7 642.3L336.9 642.5L337.0 642.8L337.2 643.2L337.3 643.6L337.5 644.1L337.7 644.6L337.8 645.1L338.0 645.7L338.1 646.2L338.3 646.8L338.4 647.3L338.6 647.9L338.8 648.4L338.9 648.9L339.1 649.3L339.2 649.7L339.4 650.1L339.5 650.4L339.7 650.6L339.9 650.7L340.0 650.8L340.2 650.8L340.3 650.8L340.5 650.7L340.7 650.5L340.8 650.2L341.0 649.9L341.1 649.5L341.3 649.1L341.4 648.6L341.6 648.1L341.8 647.6L341.9 647.0L342.1 646.4L342.2 645.9L342.4 645.3L342.5 644.8L342.7 644.3L342.9 643.8L343.0 643.4L343.2 643.0L343.3 642.6L343.5 642.4L343.7 642.2L343.8 642.0L344.0 642.0L344.1 642.0L344.3 642.0L344.4 642.2L344.6 642.4L344.8 642.7L344.9 643.0L345.1 643.4L345.2 643.8L345.4 644.3L345.5 644.8L345.7 645.4L345.9 645.9L346.0 646.5L346.2 647.0L346.3 647.6L346.5 648.1L346.7 648.6L346.8 649.1L347.0 649.5L347.1 649.9L347.3 650.2L347.4 650.5L347.6 650.7L347.8 650.8L347.9 650.8L348.1 650.8L348.2 650.7L348.4 650.6L348.5 650.4L348.7 650.1L348.9 649.7L349.0 649.3L349.2 648.9L349.3 648.4L349.5 647.8L349.7 647.3L349.8 646.7L350.0 646.2L350.1 645.6L350.3 645.1L350.4 644.5L350.6 644.0L350.8 643.6L350.9 643.2L351.1 642.8L351.2 642.5L351.4 642.3L351.5 642.1L351.7 642.0L351.9 642.0L352.0 642.0L352.2 642.1L352.3 642.3L352.5 642.5L352.7 642.8L352.8 643.2L353.0 643.6L353.1 644.1L353.3 644.6L353.4 645.1L353.6 645.6L353.8 646.2L353.9 646.8L354.1 647.3L354.2 647.9L354.4 648.4L354.5 648.9L354.7 649.3L354.9 649.7L355.0 650.1L355.2 650.4L355.3 650.6L355.5 650.7L355.6 650.8L355.8 650.8L356.0 650.8L356.1 650.7L356.3 650.5L356.4 650.2L356.6 649.9L356.8 649.5L356.9 649.1L357.1 648.6L357.2 648.1L357.4 647.6L357.5 647.0L357.7 646.5L357.9 645.9L358.0 645.4L358.2 644.8L358.3 644.3L358.5 643.8L358.6 643.4L358.8 643.0L359.0 642.7L359.1 642.4L359.3 642.2L359.4 642.0L359.6 642.0L359.8 642.0L359.9 642.0L360.1 642.2L360.2 642.4L360.4 642.6L360.5 643.0L360.7 643.4L360.9 643.8L361.0 644.3L361.2 644.8L361.3 645.3L361.5 645.9L361.6 646.5L361.8 647.0L362.0 647.6L362.1 648.1L362.3 648.6L362.4 649.1L362.6 649.5L362.8 649.9L362.9 650.2L363.1 650.5L363.2 650.7L363.4 650.8L363.5 650.8L363.7 650.8L363.9 650.7L364.0 650.6L364.2 650.4L364.3 650.1L364.5 649.7L364.6 649.3L364.8 648.9L365.0 648.4L365.1 647.9L365.3 647.3L365.4 646.8L365.6 646.2L365.8 645.7L365.9 645.1L366.1 644.6L366.2 644.1L366.4 643.6L366.5 643.2L366.7 642.8L366.9 642.5L367.0 642.3L367.2 642.1L367.3 642.0L367.5 642.0L367.6 642.0L367.8 642.1L368.0 642.3L368.1 642.5L368.3 642.8L368.4 643.2L368.6 643.6L368.8 644.0L368.9 644.5L369.1 645.0L369.2 645.6L369.4 646.2L369.5 646.7L369.7 647.3L369.9 647.8L370.0 648.3L370.2 648.8L370.3 649.3L370.5 649.7L370.6 650.0L370.8 650.3L371.0 650.6L371.1 650.7L371.3 650.8L371.4 650.8L371.6 650.8L371.8 650.7L371.9 650.5L372.1 650.2L372.2 649.9L372.4 649.5L372.5 649.1L372.7 648.7L372.9 648.2L373.0 647.6L373.2 647.1L373.3 646.5L373.5 645.9L373.6 645.4L373.8 644.9L374.0 644.3L374.1 643.9L374.3 643.4L374.4 643.0L374.6 642.7L374.8 642.4L374.9 642.2L375.1 642.0L375.2 642.0L375.4 642.0L375.5 642.0L375.7 642.2L375.9 642.4L376.0 642.6L376.2 643.0L376.3 643.3L376.5 643.8L376.6 644.3L376.8 644.8L377.0 645.3L377.1 645.9L377.3 646.4L377.4 647.0L377.6 647.5L377.8 648.1L377.9 648.6L378.1 649.1L378.2 649.5L378.4 649.9L378.5 650.2L378.7 650.5L378.9 650.7L379.0 650.8L379.2 650.8L379.3 650.8L379.5 650.8L379.6 650.6L379.8 650.4L380.0 650.1L380.1 649.8L380.3 649.4L380.4 648.9L380.6 648.4L380.8 647.9L380.9 647.4L381.1 646.8L381.2 646.2L381.4 645.7L381.5 645.1L381.7 644.6L381.9 644.1L382.0 643.6L382.2 643.2L382.3 642.9L382.5 642.5L382.6 642.3L382.8 642.1L383.0 642.0L383.1 642.0L383.3 642.0L383.4 642.1L383.6 642.2L383.8 642.5L383.9 642.8L384.1 643.1L384.2 643.5L384.4 644.0L384.5 644.5L384.7 645.0L384.9 645.6L385.0 646.1L385.2 646.7L385.3 647.2L385.5 647.8L385.6 648.3L385.8 648.8L386.0 649.3L386.1 649.7L386.3 650.0L386.4 650.3L386.6 650.6L386.8 650.7L386.9 650.8L387.1 650.8L387.2 650.8L387.4 650.7L387.5 650.5L387.7 650.3L387.9 649.9L388.0 649.6L388.2 649.2L388.3 648.7L388.5 648.2L388.6 647.7L388.8 647.1L389.0 646.5L389.1 646.0L389.3 645.4L389.4 644.9L389.6 644.4L389.8 643.9L389.9 643.4L390.1 643.0L390.2 642.7L390.4 642.4L390.5 642.2L390.7 642.0L390.9 642.0L391.0 642.0L391.2 642.0L391.3 642.1L391.5 642.3L391.6 642.6L391.8 642.9L392.0 643.3L392.1 643.8L392.3 644.2L392.4 644.7L392.6 645.3L392.8 645.8L392.9 646.4L393.1 647.0L393.2 647.5L393.4 648.0L393.5 648.6L393.7 649.0L393.9 649.5L394.0 649.8L394.2 650.2L394.3 650.4L394.5 650.6L394.6 650.8L394.8 650.8L395.0 650.8L395.1 650.8L395.3 650.6L395.4 650.4L395.6 650.1L395.8 649.8L395.9 649.4L396.1 648.9L396.2 648.5L396.4 647.9L396.5 647.4L396.7 646.8L396.9 646.3L397.0 645.7L397.2 645.2L397.3 644.6L397.5 644.1L397.6 643.7L397.8 643.2L398.0 642.9L398.1 642.6L398.3 642.3L398.4 642.1L398.6 642.0L398.8 642.0L398.9 642.0L399.1 642.1L399.2 642.2L399.4 642.5L399.5 642.8L399.7 643.1L399.9 643.5L400.0 644.0L400.2 644.5L400.3 645.0L400.5 645.5L400.6 646.1L400.8 646.7L401.0 647.2L401.1 647.8L401.3 648.3L401.4 648.8L401.6 649.2L401.8 649.6L401.9 650.0L402.1 650.3L402.2 650.5L402.4 650.7L402.5 650.8L402.7 650.8L402.9 650.8L403.0 650.7L403.2 650.5L403.3 650.3L403.5 650.0L403.6 649.6L403.8 649.2L404.0 648.7L404.1 648.2L404.3 647.7L404.4 647.1L404.6 646.6L404.8 646.0L404.9 645.5L405.1 644.9L405.2 644.4L405.4 643.9L405.5 643.5L405.7 643.1L405.9 642.7L406.0 642.4L406.2 642.2L406.3 642.1L406.5 642.0L406.6 642.0L406.8 642.0L407.0 642.1L407.1 642.3L407.3 642.6L407.4 642.9L407.6 643.3L407.8 643.7L407.9 644.2L408.1 644.7L408.2 645.2L408.4 645.8L408.5 646.4L408.7 646.9L408.9 647.5L409.0 648.0L409.2 648.5L409.3 649.0L409.5 649.4L409.6 649.8L409.8 650.2L410.0 650.4L410.1 650.6L410.3 650.8L410.4 650.8L410.6 650.8L410.8 650.8L410.9 650.6L411.1 650.4L411.2 650.1L411.4 649.8L411.5 649.4L411.7 649.0L411.9 648.5L412.0 648.0L412.2 647.4L412.3 646.9L412.5 646.3L412.6 645.7L412.8 645.2L413.0 644.7L413.1 644.2L413.3 643.7L413.4 643.3L413.6 642.9L413.8 642.6L413.9 642.3L414.1 642.1L414.2 642.0L414.4 642.0L414.5 642.0L414.7 642.1L414.9 642.2L415.0 642.5L415.2 642.7L415.3 643.1L415.5 643.5L415.6 643.9L415.8 644.4L416.0 645.0L416.1 645.5L416.3 646.1L416.4 646.6L416.6 647.2L416.8 647.7L416.9 648.3L417.1 648.8L417.2 649.2L417.4 649.6L417.5 650.0L417.7 650.3L417.9 650.5L418.0 650.7L418.2 650.8L418.3 650.8L418.5 650.8L418.6 650.7L418.8 650.5L419.0 650.3L419.1 650.0L419.3 649.6L419.4 649.2L419.6 648.7L419.8 648.2L419.9 647.7L420.1 647.2L420.2 646.6L420.4 646.0L420.5 645.5L420.7 644.9L420.9 644.4L421.0 643.9L421.2 643.5L421.3 643.1L421.5 642.7L421.6 642.4L421.8 642.2L422.0 642.1L422.1 642.0L422.3 642.0L422.4 642.0L422.6 642.1L422.8 642.3L422.9 642.6L423.1 642.9L423.2 643.3L423.4 643.7L423.5 644.2L423.7 644.7L423.9 645.2L424.0 645.8L424.2 646.3L424.3 646.9L424.5 647.4L424.6 648.0L424.8 648.5L425.0 649.0L425.1 649.4L425.3 649.8L425.4 650.1L425.6 650.4L425.8 650.6L425.9 650.8L426.1 650.8L426.2 650.8L426.4 650.8L426.5 650.6L426.7 650.4" stroke="#d62728" stroke-width="2.4" fill="none" stroke-linejoin="round"/>
<path d="M284 724.5H428" stroke="#333" stroke-width="1" fill="none"/>
<path d="M142 289.5V725.5" stroke="#000" stroke-width="2" fill="none"/>
<path d="M141 724.5h-4.2M141 681.5h-4.2M141 637.5h-4.2M141 594.5h-4.2M141 550.5h-4.2M141 507.5h-4.2M141 463.5h-4.2M141 420.5h-4.2M141 376.5h-4.2M141 333.5h-4.2M141 289.5h-4.2" stroke="#000" stroke-width="1" fill="none"/>
<text x="130.6" y="728.8" text-anchor="end" fill="#000">0</text>
<text x="130.6" y="685.8" text-anchor="end" fill="#000">10</text>
<text x="130.6" y="641.8" text-anchor="end" fill="#000">20</text>
<text x="130.6" y="598.8" text-anchor="end" fill="#000">30</text>
<text x="130.6" y="554.8" text-anchor="end" fill="#000">40</text>
<text x="130.6" y="511.8" text-anchor="end" fill="#000">50</text>
<text x="130.6" y="467.8" text-anchor="end" fill="#000">60</text>
<text x="130.6" y="424.8" text-anchor="end" fill="#000">70</text>
<text x="130.6" y="380.8" text-anchor="end" fill="#000">80</text>
<text x="130.6" y="337.8" text-anchor="end" fill="#000">90</text>
<text x="130.6" y="293.8" text-anchor="end" fill="#000">100</text>
<path d="M213 289.5V725.5" stroke="#000" stroke-width="2" fill="none"/>
<path d="M212 724.5h-4.2M212 695.5h-4.2M212 666.5h-4.2M212 637.5h-4.2M212 608.5h-4.2M212 579.5h-4.2M212 550.5h-4.2M212 521.5h-4.2M212 492.5h-4.2M212 463.5h-4.2M212 434.5h-4.2M212 405.5h-4.2M212 376.5h-4.2M212 347.5h-4.2M212 318.5h-4.2M212 289.5h-4.2" stroke="#000" stroke-width="1" fill="none"/>
<text x="201.6" y="728.8" text-anchor="end" fill="#000">0</text>
<text x="201.6" y="699.8" text-anchor="end" fill="#000">100</text>
<text x="201.6" y="670.8" text-anchor="end" fill="#000">200</text>
<text x="201.6" y="641.8" text-anchor="end" fill="#000">300</text>
<text x="201.6" y="612.8" text-anchor="end" fill="#000">400</text>
<text x="201.6" y="583.8" text-anchor="end" fill="#000">500</text>
<text x="201.6" y="554.8" text-anchor="end" fill="#000">600</text>
<text x="201.6" y="525.8" text-anchor="end" fill="#000">700</text>
<text x="201.6" y="496.8" text-anchor="end" fill="#000">800</text>
<text x="201.6" y="467.8" text-anchor="end" fill="#000">900</text>
<text x="201.6" y="438.8" text-anchor="end" fill="#000">1000</text>
<text x="201.6" y="409.8" text-anchor="end" fill="#000">1100</text>
<text x="201.6" y="380.8" text-anchor="end" fill="#000">1200</text>
<text x="201.6" y="351.8" text-anchor="end" fill="#000">1300</text>
<text x="201.6" y="322.8" text-anchor="end" fill="#000">1400</text>
<text x="201.6" y="293.8" text-anchor="end" fill="#000">1500</text>
<path d="M284 289.5V725.5" stroke="#000" stroke-width="2" fill="none"/>
<path d="M283 724.5h-4.2M283 681.5h-4.2M283 637.5h-4.2M283 594.5h-4.2M283 550.5h-4.2M283 507.5h-4.2M283 463.5h-4.2M283 420.5h-4.2M283 376.5h-4.2M283 333.5h-4.2M283 289.5h-4.2" stroke="#000" stroke-width="1" fill="none"/>
<text x="272.6" y="728.8" text-anchor="end" fill="#000">0</text>
<text x="272.6" y="685.8" text-anchor="end" fill="#000">10</text>
<text x="272.6" y="641.8" text-anchor="end" fill="#000">20</text>
<text x="272.6" y="598.8" text-anchor="end" fill="#000">30</text>
<text x="272.6" y="554.8" text-anchor="end" fill="#000">40</text>
<text x="272.6" y="511.8" text-anchor="end" fill="#000">50</text>
<text x="272.6" y="467.8" text-anchor="end" fill="#000">60</text>
<text x="272.6" y="424.8" text-anchor="end" fill="#000">70</text>
<text x="272.6" y="380.8" text-anchor="end" fill="#000">80</text>
<text x="272.6" y="337.8" text-anchor="end" fill="#000">90</text>
<text x="272.6" y="293.8" text-anchor="end" fill="#000">100</text>
<text transform="translate(102 507) rotate(-90)" text-anchor="middle" fill="#000">%rF</text>
<text transform="translate(173 507) rotate(-90)" text-anchor="middle" fill="#000">mBar</text>
<text transform="translate(243 507) rotate(-90)" text-anchor="middle" fill="#000">°C</text>
<path d="M284.6 756H286.7V778H290.3V756H293.8V778H297.4V756H300.9V778H304.5V756H308.0V778H311.6V756H315.2V778H318.7V756H322.3V778H325.8V756H329.4V778H332.9V756H336.5V778H340.0V756H343.6V778H347.1V756H350.7V778H354.2V756H357.8V778H361.3V756H364.9V778H368.4V756H372.0V778H375.5V756H379.1V778H382.6V756H386.2V778H389.8V756H393.3V778H396.9V756H400.4V778H404.0V756H407.5V778H411.1V756H414.6V778H418.2V756H421.7V778H425.3V756" stroke="#bcbd22" stroke-width="2" fill="none"/>
<rect x="284.5" y="782.7" width="142.8" height="23.5" fill="#ffbb78"/>
<path d="M284 832.7H428" stroke="#c5b0d5" stroke-width="2" fill="none"/>
<text x="284" y="777" fill="#444" fill-opacity="0.55">Schleuse P102</text>
<text x="284" y="804" fill="#444" fill-opacity="0.55">Luftbefeuchtung</text>
<text x="284" y="832" fill="#444" fill-opacity="0.55">Sterilisation</text>
<path d="M330.5 833.5v5M378.5 833.5v5M425.5 833.5v5" stroke="#444" stroke-width="1" fill="none"/>
<text x="330.6" y="852" text-anchor="middle" fill="#2a3f5f">17:20</text>
<text x="378.3" y="852" text-anchor="middle" fill="#2a3f5f">17:30</text>
<text x="425.7" y="852" text-anchor="middle" fill="#2a3f5f">17:40</text>
<text x="331" y="868" text-anchor="middle" fill="#2a3f5f">31.07.2025</text>
<polygon points="459.5,304.5 456.5,309.7 450.5,309.7 447.5,304.5 450.5,299.3 456.5,299.3" fill="#f7c57c"/>
<polygon points="459.5,323.5 456.5,328.7 450.5,328.7 447.5,323.5 450.5,318.3 456.5,318.3" fill="#8582f5"/>
<text x="474" y="309" font-size="12.15" fill="#b4b4b4">Events: Symbol</text>
<text x="474" y="328" font-size="12.3" fill="#b4b4b4">Information: Symbol</text>
<text x="439" y="357.8" font-size="13" fill="#000">Scale 0<tspan dx="1.4">°C</tspan> to 100<tspan dx="1.4">°C</tspan></text>
<path d="M439 372.0h30" stroke="#d62728" stroke-width="2"/>
<text x="474" y="376.6" fill="#444">Temperatur T38.1</text>
<text x="439" y="406.8" font-size="13" fill="#000">Scale 0<tspan dx="1.3">mBar</tspan> to 1,500<tspan dx="1.3">mBar</tspan></text>
<path d="M439 421.0h30" stroke="#1f77b4" stroke-width="2"/>
<text x="474" y="425.6" fill="#444">Druck P54.2</text>
<path d="M439 440.0h30" stroke="#aec7e8" stroke-width="2"/>
<text x="474" y="444.6" fill="#444">Druck P56.2</text>
<text x="439" y="474.8" font-size="13" fill="#000">Scale 0<tspan dx="3">%rF</tspan> to 100<tspan dx="3">%rF</tspan></text>
<path d="M439 489.0h30" stroke="#98df8a" stroke-width="2"/>
<text x="474" y="493.6" fill="#444">Feuchte H79.3</text>
<text x="439" y="523.8" font-size="12.8" fill="#444">Digital</text>
<path d="M439 538.0h30" stroke="#bcbd22" stroke-width="2"/>
<text x="474" y="542.6" fill="#444">Schleuse P102</text>
<path d="M439 557.0h30" stroke="#ffbb78" stroke-width="2"/>
<text x="474" y="561.6" fill="#444">Luftbefeuchtung</text>
<path d="M439 576.0h30" stroke="#c5b0d5" stroke-width="2"/>
<text x="474" y="580.6" fill="#444">Sterilisation</text>
<path d="M352.3 249.8h3.2l0.9-2.2h5.4l0.9 2.200h3.200a1.200 1.200 0 0 1 1.200 1.200v8.200a1.200 1.200 0 0 1 -1.200 1.200h-13.600a1.200 1.200 0 0 1 -1.200 -1.200v-8.200a1.200 1.200 0 0 1 1.200 -1.200z" fill="#cbcbcb"/>
<circle cx="359.1" cy="254.9" r="2.9" fill="none" stroke="#fff" stroke-width="1.6"/>
<path d="M391 247.8l7.200 6.400-0.800 0.900-6.400-5.600-6.400 5.600-0.800-0.900zM386.200 255.400l4.800-4.200 4.800 4.200v5h-3.400v-3.600h-2.800v3.600h-3.400zM394.200 248.200h1.600v2.900l-1.600-1.400z" fill="#cbcbcb"/>
<circle cx="414.5" cy="251.8" r="4.500" fill="none" stroke="#cbcbcb" stroke-width="1.300"/>
<path d="M417.5 255.300l4.300 4.300" stroke="#cbcbcb" stroke-width="1.800" fill="none"/>
<circle cx="411.0" cy="257.700" r="3" fill="#fff" stroke="#cbcbcb" stroke-width="1.100"/>
<path d="M413.0 257.700h-3.600m1.500-1.500l-1.500 1.500 1.500 1.500" stroke="#cbcbcb" stroke-width="1" fill="none"/>
<circle cx="438.4" cy="251.8" r="4.500" fill="none" stroke="#cbcbcb" stroke-width="1.300"/>
<path d="M441.4 255.300l4.300 4.300" stroke="#cbcbcb" stroke-width="1.800" fill="none"/>
<circle cx="434.9" cy="257.700" r="3" fill="#fff" stroke="#cbcbcb" stroke-width="1.100"/>
<path d="M436.9 257.700h-3.600m1.500-1.500l-1.500 1.500 1.500 1.500" stroke="#cbcbcb" stroke-width="1" fill="none"/>
<path d="M458 251.300h6.500" stroke="#cbcbcb" stroke-width="1.200" stroke-dasharray="1.500 1.500" fill="none"/>
<path d="M464 251.300h4.500m-2.500-2.300l2.500 2.300-2.500 2.300" stroke="#cbcbcb" stroke-width="1.200" fill="none"/>
<path d="M468 256.500h-6.500" stroke="#cbcbcb" stroke-width="1.200" stroke-dasharray="1.500 1.500" fill="none"/>
<path d="M462 256.500h-4.500m2.500-2.300l-2.500 2.300 2.500 2.300" stroke="#cbcbcb" stroke-width="1.200" fill="none"/>
<circle cx="489" cy="249.600" r="1.900" fill="#cbcbcb"/>
<path d="M479 249.600h8" stroke="#cbcbcb" stroke-width="1.500" stroke-dasharray="1.800 2" fill="none"/>
<path d="M489 253v8" stroke="#cbcbcb" stroke-width="1.500" stroke-dasharray="1.800 2.400" fill="none"/>
<path d="M503.200 254l3.800-4h11.800v7.800h-11.800z" fill="#cbcbcb"/>
<path d="M526.600 250.300l2.900-2.500h13.500v5h-13.500zM526.600 257.600l2.900-2.500h13.500v5h-13.500z" fill="#7f7f7f"/>
<path d="M552.700 256.800l4.800-5.300 3.400 4 4.200-4.700" stroke="#cbcbcb" stroke-width="1.200" fill="none"/>
<circle cx="552.700" cy="256.800" r="1" fill="#cbcbcb"/><circle cx="565.100" cy="250.800" r="1" fill="#cbcbcb"/>
<rect x="575.700" y="246.700" width="14.800" height="14.800" rx="1.500" fill="none" stroke="#cbcbcb" stroke-width="1"/>
<path d="M580.200 252.300l2.900-2.800 2.900 2.800M580.200 255.800l2.900 2.800 2.900-2.800" stroke="#cbcbcb" stroke-width="1" fill="none"/>
<path d="M599 251.400l5.700-4.300 5.200 4.400 4.900-3.900" stroke="#7f7f7f" stroke-width="1.800" fill="none"/>
<path d="M599 256.300h15.800M599 260.800h15.800" stroke="#7f7f7f" stroke-width="1.800" fill="none"/>
</svg>
</div>
<div class="grip" style="left:660px"><i style="top:0px"></i><i style="top:6px"></i><i style="top:12px"></i><i style="top:18px"></i><i style="top:24px"></i></div>
<div class="card" id="c2" style="left:668px;width:594px">
<div class="hd"><svg class="ic" viewBox="0 0 24 24" style="width:24px;height:24px;color:#212121;left:20px;top:13px" fill="currentColor"><rect x="4" y="3.500" width="16" height="17" rx="1.200" fill="none" stroke="currentColor" stroke-width="1.800"/><path d="M4 9.200h16M4 14.800h16" fill="none" stroke="currentColor" stroke-width="1.800"/><rect x="6.300" y="5.600" width="2" height="1.600"/><rect x="6.300" y="11.200" width="2" height="1.600"/><rect x="6.300" y="16.800" width="2" height="1.600"/></svg><span class="ttl" style="left:60px">Process values</span><span class="cnt" style="left:205px">1837 / 1837</span><svg class="ic" viewBox="0 0 24 24" style="width:24px;height:24px;color:#212121;left:542px;top:13px" fill="currentColor"><path d="M14.15 5.76L13.76 2.97L10.24 2.97L9.85 5.76L7.67 7.02L5.06 5.96L3.30 9.00L5.52 10.74L5.52 13.26L3.30 15.00L5.06 18.04L7.67 16.98L9.85 18.24L10.24 21.03L13.76 21.03L14.15 18.24L16.33 16.98L18.94 18.04L20.70 15.00L18.48 13.26L18.48 10.74L20.70 9.00L18.94 5.96L16.33 7.02Z" fill="none" stroke="currentColor" stroke-width="2" stroke-linejoin="round"/><circle cx="12" cy="12" r="3.500"/></svg></div>
<div class="pg" style="left:-668px;top:-171px">
<div class="xp" style="left:688px;top:242px;width:554px;height:36px">
<svg class="ic" viewBox="0 0 24 24" style="left:24px;top:7px;width:22px;height:22px" fill="#212121"><path d="M2.500 8h6v2h-6zM2.500 12.500h6v2h-6zM2.500 17h9v2h-9z"/><circle cx="15" cy="11" r="4.300" fill="none" stroke="#212121" stroke-width="2"/><path d="M18.200 14.200l4.300 4.300" stroke="#212121" stroke-width="2.200" fill="none"/></svg>
<span class="abs xt" style="left:53.500px;top:0">Going to: Value / Time / Status signal</span>
<svg class="ic" viewBox="0 0 24 24" style="width:20px;height:20px;color:#616161;left:516px;top:10px" fill="currentColor"><path d="M7.410 8.590L12 13.170l4.590-4.580L18 10l-6 6-6-6 1.410-1.410z"/></svg>
</div>
<span class="abs th14" style="left:695px;top:320px">Time</span>
<div class="abs cb" style="left:755px;top:302px"><svg class="ic" viewBox="0 0 24 24" style="width:18px;height:18px;color:#8a8a8a;left:7px;top:7px" fill="currentColor"><path d="M7.410 15.410L12 10.830l4.590 4.580L18 14l-6-6-6 6z"/></svg></div>
<div class="abs cb" style="left:800px;top:302px"><svg class="ic" viewBox="0 0 24 24" style="width:18px;height:18px;color:#8a8a8a;left:7px;top:7px" fill="currentColor"><path d="M7.410 8.590L12 13.170l4.590-4.580L18 10l-6 6-6-6 1.410-1.410z"/></svg></div>
<span class="abs th12" style="left:884px;top:309.500px">Temperatur</span>
<span class="abs th12" style="left:884px;top:323.500px">T38.1</span>
<svg class="ic" viewBox="0 0 24 24" style="width:16px;height:16px;color:#212121;left:948.5px;top:315.700px" fill="currentColor"><path d="M3.5 18.490l6-6.010 4 4L22 6.920l-1.410-1.410-7.090 7.970-4-4L2 16.990z"/></svg>
<span class="abs th12" style="left:979px;top:323.500px">Druck P54.2</span>
<svg class="ic" viewBox="0 0 24 24" style="width:16px;height:16px;color:#212121;left:1047.5px;top:315.700px" fill="currentColor"><path d="M3.5 18.490l6-6.010 4 4L22 6.920l-1.410-1.410-7.090 7.970-4-4L2 16.990z"/></svg>
<span class="abs th12" style="left:1078px;top:309.500px">Druck</span>
<span class="abs th12" style="left:1078px;top:323.500px">P56.2</span>
<svg class="ic" viewBox="0 0 24 24" style="width:16px;height:16px;color:#212121;left:1135.5px;top:315.700px" fill="currentColor"><path d="M3.5 18.490l6-6.010 4 4L22 6.920l-1.410-1.410-7.090 7.970-4-4L2 16.990z"/></svg>
<span class="abs th12" style="left:1166px;top:309.500px">Feuchte</span>
<span class="abs th12" style="left:1166px;top:323.500px">H79.3</span>
<svg class="ic" viewBox="0 0 24 24" style="width:16px;height:16px;color:#212121;left:1216.5px;top:315.700px" fill="currentColor"><path d="M3.5 18.490l6-6.010 4 4L22 6.920l-1.410-1.410-7.090 7.970-4-4L2 16.990z"/></svg>
<div class="abs" style="left:688px;top:348px;width:545px;height:521px;overflow:hidden">
<div class="row" style="top:-20px">
<svg class="ic" viewBox="0 0 24 24" style="left:7px;top:6px;width:24px;height:24px"><circle cx="12" cy="12" r="11.300" fill="none" stroke="#e6e6e6" stroke-width="1"/><path transform="translate(12 12) scale(1.18) translate(-12 -12.300)" d="M12 4.500c-3 0-5.400 2.400-5.400 5.400 0 4 5.400 9.600 5.400 9.600s5.400-5.600 5.400-9.600c0-3-2.400-5.400-5.400-5.400zm0 7.600a2.200 2.200 0 1 1 0-4.400 2.200 2.200 0 0 1 0 4.400z" fill="#e0e0e0"/></svg>
<span class="abs ts" style="left:38px;top:-1px">31.07.2025 17:10:00</span>
<span class="abs ms" style="left:202.3px;top:5px">+594ms</span>
<span class="abs val" style="right:284.0px;top:16px">17.80&nbsp;&nbsp;°C</span>
<span class="abs ms" style="left:306.0px;top:5px">+594ms</span>
<span class="abs val" style="right:170.5px;top:16px;letter-spacing:0.05px">1,159&nbsp;&nbsp;mBar</span>
<span class="abs ms" style="left:399.5px;top:5px">+594ms</span>
<span class="abs val" style="right:82.5px;top:16px;letter-spacing:0.05px">603&nbsp;&nbsp;mBar</span>
<span class="abs ms" style="left:484.5px;top:5px">+594ms</span>
<span class="abs val" style="right:1.0px;top:16px;letter-spacing:-0.3px">49.7&nbsp;&nbsp;%rF</span>
</div>
<div class="row" style="top:17px">
<svg class="ic" viewBox="0 0 24 24" style="left:7px;top:6px;width:24px;height:24px"><circle cx="12" cy="12" r="11.300" fill="none" stroke="#e6e6e6" stroke-width="1"/><path transform="translate(12 12) scale(1.18) translate(-12 -12.300)" d="M12 4.500c-3 0-5.400 2.400-5.400 5.400 0 4 5.400 9.600 5.400 9.600s5.400-5.600 5.400-9.600c0-3-2.400-5.400-5.400-5.400zm0 7.600a2.200 2.200 0 1 1 0-4.400 2.200 2.200 0 0 1 0 4.400z" fill="#e0e0e0"/></svg>
<span class="abs ts" style="left:38px;top:-1px">31.07.2025 17:10:01</span>
<span class="abs ms" style="left:202.3px;top:5px">+594ms</span>
<span class="abs val" style="right:284.0px;top:16px">17.74&nbsp;&nbsp;°C</span>
<span class="abs ms" style="left:306.0px;top:5px">+594ms</span>
<span class="abs val" style="right:170.5px;top:16px;letter-spacing:0.05px">1,163&nbsp;&nbsp;mBar</span>
<span class="abs ms" style="left:399.5px;top:5px">+594ms</span>
<span class="abs val" style="right:82.5px;top:16px;letter-spacing:0.05px">601&nbsp;&nbsp;mBar</span>
<span class="abs ms" style="left:484.5px;top:5px">+594ms</span>
<span class="abs val" style="right:1.0px;top:16px;letter-spacing:-0.3px">49.8&nbsp;&nbsp;%rF</span>
</div>
<div class="row" style="top:54px">
<svg class="ic" viewBox="0 0 24 24" style="left:7px;top:6px;width:24px;height:24px"><circle cx="12" cy="12" r="11.300" fill="none" stroke="#e6e6e6" stroke-width="1"/><path transform="translate(12 12) scale(1.18) translate(-12 -12.300)" d="M12 4.500c-3 0-5.400 2.400-5.400 5.400 0 4 5.400 9.600 5.400 9.600s5.400-5.600 5.400-9.600c0-3-2.400-5.400-5.400-5.400zm0 7.600a2.200 2.200 0 1 1 0-4.400 2.200 2.200 0 0 1 0 4.400z" fill="#e0e0e0"/></svg>
<span class="abs ts" style="left:38px;top:-1px">31.07.2025 17:10:02</span>
<span class="abs ms" style="left:202.3px;top:5px">+594ms</span>
<span class="abs val" style="right:284.0px;top:16px">17.68&nbsp;&nbsp;°C</span>
<span class="abs ms" style="left:306.0px;top:5px">+594ms</span>
<span class="abs val" style="right:170.5px;top:16px;letter-spacing:0.05px">1,166&nbsp;&nbsp;mBar</span>
<span class="abs ms" style="left:399.5px;top:5px">+594ms</span>
<span class="abs val" style="right:82.5px;top:16px;letter-spacing:0.05px">599&nbsp;&nbsp;mBar</span>
<span class="abs ms" style="left:484.5px;top:5px">+594ms</span>
<span class="abs val" style="right:1.0px;top:16px;letter-spacing:-0.3px">49.8&nbsp;&nbsp;%rF</span>
</div>
<div class="row" style="top:91px">
<svg class="ic" viewBox="0 0 24 24" style="left:7px;top:6px;width:24px;height:24px"><circle cx="12" cy="12" r="11.300" fill="none" stroke="#e6e6e6" stroke-width="1"/><path transform="translate(12 12) scale(1.18) translate(-12 -12.300)" d="M12 4.500c-3 0-5.400 2.400-5.400 5.400 0 4 5.400 9.600 5.400 9.600s5.400-5.600 5.400-9.600c0-3-2.400-5.400-5.400-5.400zm0 7.600a2.200 2.200 0 1 1 0-4.400 2.200 2.200 0 0 1 0 4.400z" fill="#e0e0e0"/></svg>
<span class="abs ts" style="left:38px;top:-1px">31.07.2025 17:10:03</span>
<span class="abs ms" style="left:202.3px;top:5px">+594ms</span>
<span class="abs val" style="right:284.0px;top:16px">17.62&nbsp;&nbsp;°C</span>
<span class="abs ms" style="left:306.0px;top:5px">+594ms</span>
<span class="abs val" style="right:170.5px;top:16px;letter-spacing:0.05px">1,169&nbsp;&nbsp;mBar</span>
<span class="abs ms" style="left:399.5px;top:5px">+594ms</span>
<span class="abs val" style="right:82.5px;top:16px;letter-spacing:0.05px">597&nbsp;&nbsp;mBar</span>
<span class="abs ms" style="left:484.5px;top:5px">+594ms</span>
<span class="abs val" style="right:1.0px;top:16px;letter-spacing:-0.3px">49.9&nbsp;&nbsp;%rF</span>
</div>
<div class="row" style="top:128px">
<svg class="ic" viewBox="0 0 24 24" style="left:7px;top:6px;width:24px;height:24px"><circle cx="12" cy="12" r="11.300" fill="none" stroke="#e6e6e6" stroke-width="1"/><path transform="translate(12 12) scale(1.18) translate(-12 -12.300)" d="M12 4.500c-3 0-5.400 2.400-5.400 5.400 0 4 5.400 9.600 5.400 9.600s5.400-5.600 5.400-9.600c0-3-2.400-5.400-5.400-5.400zm0 7.600a2.200 2.200 0 1 1 0-4.400 2.200 2.200 0 0 1 0 4.400z" fill="#e0e0e0"/></svg>
<span class="abs ts" style="left:38px;top:-1px">31.07.2025 17:10:04</span>
<span class="abs ms" style="left:202.3px;top:5px">+594ms</span>
<span class="abs val" style="right:284.0px;top:16px">17.56&nbsp;&nbsp;°C</span>
<span class="abs ms" style="left:306.0px;top:5px">+594ms</span>
<span class="abs val" style="right:170.5px;top:16px;letter-spacing:0.05px">1,173&nbsp;&nbsp;mBar</span>
<span class="abs ms" style="left:399.5px;top:5px">+594ms</span>
<span class="abs val" style="right:82.5px;top:16px;letter-spacing:0.05px">595&nbsp;&nbsp;mBar</span>
<span class="abs ms" style="left:484.5px;top:5px">+594ms</span>
<span class="abs val" style="right:1.0px;top:16px;letter-spacing:-0.3px">49.9&nbsp;&nbsp;%rF</span>
</div>
<div class="row" style="top:165px">
<svg class="ic" viewBox="0 0 24 24" style="left:7px;top:6px;width:24px;height:24px"><circle cx="12" cy="12" r="11.300" fill="none" stroke="#e6e6e6" stroke-width="1"/><path transform="translate(12 12) scale(1.18) translate(-12 -12.300)" d="M12 4.500c-3 0-5.400 2.400-5.400 5.400 0 4 5.400 9.600 5.400 9.600s5.400-5.600 5.400-9.600c0-3-2.400-5.400-5.400-5.400zm0 7.600a2.200 2.200 0 1 1 0-4.400 2.200 2.200 0 0 1 0 4.400z" fill="#e0e0e0"/></svg>
<span class="abs ts" style="left:38px;top:-1px">31.07.2025 17:10:05</span>
<span class="abs ms" style="left:202.3px;top:5px">+594ms</span>
<span class="abs val" style="right:284.0px;top:16px">17.51&nbsp;&nbsp;°C</span>
<span class="abs ms" style="left:306.0px;top:5px">+594ms</span>
<span class="abs val" style="right:170.5px;top:16px;letter-spacing:0.05px">1,175&nbsp;&nbsp;mBar</span>
<span class="abs ms" style="left:399.5px;top:5px">+594ms</span>
<span class="abs val" style="right:82.5px;top:16px;letter-spacing:0.05px">594&nbsp;&nbsp;mBar</span>
<span class="abs ms" style="left:484.5px;top:5px">+594ms</span>
<span class="abs val" style="right:1.0px;top:16px;letter-spacing:-0.3px">50.0&nbsp;&nbsp;%rF</span>
</div>
<div class="row" style="top:202px">
<svg class="ic" viewBox="0 0 24 24" style="left:7px;top:6px;width:24px;height:24px"><circle cx="12" cy="12" r="11.300" fill="none" stroke="#e6e6e6" stroke-width="1"/><path transform="translate(12 12) scale(1.18) translate(-12 -12.300)" d="M12 4.500c-3 0-5.400 2.400-5.400 5.400 0 4 5.400 9.600 5.400 9.600s5.400-5.600 5.400-9.600c0-3-2.400-5.400-5.400-5.400zm0 7.600a2.200 2.200 0 1 1 0-4.400 2.200 2.200 0 0 1 0 4.400z" fill="#e0e0e0"/></svg>
<span class="abs ts" style="left:38px;top:-1px">31.07.2025 17:10:06</span>
<span class="abs ms" style="left:202.3px;top:5px">+594ms</span>
<span class="abs val" style="right:284.0px;top:16px">17.45&nbsp;&nbsp;°C</span>
<span class="abs ms" style="left:306.0px;top:5px">+594ms</span>
<span class="abs val" style="right:170.5px;top:16px;letter-spacing:0.05px">1,178&nbsp;&nbsp;mBar</span>
<span class="abs ms" style="left:399.5px;top:5px">+594ms</span>
<span class="abs val" style="right:82.5px;top:16px;letter-spacing:0.05px">592&nbsp;&nbsp;mBar</span>
<span class="abs ms" style="left:484.5px;top:5px">+594ms</span>
<span class="abs val" style="right:1.0px;top:16px;letter-spacing:-0.3px">50.0&nbsp;&nbsp;%rF</span>
</div>
<div class="row" style="top:239px">
<svg class="ic" viewBox="0 0 24 24" style="left:7px;top:6px;width:24px;height:24px"><circle cx="12" cy="12" r="11.300" fill="none" stroke="#e6e6e6" stroke-width="1"/><path transform="translate(12 12) scale(1.18) translate(-12 -12.300)" d="M12 4.500c-3 0-5.400 2.400-5.400 5.400 0 4 5.400 9.600 5.400 9.600s5.400-5.600 5.400-9.600c0-3-2.400-5.400-5.400-5.400zm0 7.600a2.200 2.200 0 1 1 0-4.400 2.200 2.200 0 0 1 0 4.400z" fill="#e0e0e0"/></svg>
<span class="abs ts" style="left:38px;top:-1px">31.07.2025 17:10:07</span>
<span class="abs ms" style="left:202.3px;top:5px">+594ms</span>
<span class="abs val" style="right:284.0px;top:16px">17.40&nbsp;&nbsp;°C</span>
<span class="abs ms" style="left:306.0px;top:5px">+594ms</span>
<span class="abs val" style="right:170.5px;top:16px;letter-spacing:0.05px">1,181&nbsp;&nbsp;mBar</span>
<span class="abs ms" style="left:399.5px;top:5px">+594ms</span>
<span class="abs val" style="right:82.5px;top:16px;letter-spacing:0.05px">591&nbsp;&nbsp;mBar</span>
<span class="abs ms" style="left:484.5px;top:5px">+594ms</span>
<span class="abs val" style="right:1.0px;top:16px;letter-spacing:-0.3px">50.0&nbsp;&nbsp;%rF</span>
</div>
<div class="row" style="top:276px">
<svg class="ic" viewBox="0 0 24 24" style="left:7px;top:6px;width:24px;height:24px"><circle cx="12" cy="12" r="11.300" fill="none" stroke="#e6e6e6" stroke-width="1"/><path transform="translate(12 12) scale(1.18) translate(-12 -12.300)" d="M12 4.500c-3 0-5.400 2.400-5.400 5.400 0 4 5.400 9.600 5.400 9.600s5.400-5.600 5.400-9.600c0-3-2.400-5.400-5.400-5.400zm0 7.600a2.200 2.200 0 1 1 0-4.400 2.200 2.200 0 0 1 0 4.400z" fill="#e0e0e0"/></svg>
<span class="abs ts" style="left:38px;top:-1px">31.07.2025 17:10:08</span>
<span class="abs ms" style="left:202.3px;top:5px">+594ms</span>
<span class="abs val" style="right:284.0px;top:16px">17.35&nbsp;&nbsp;°C</span>
<span class="abs ms" style="left:306.0px;top:5px">+594ms</span>
<span class="abs val" style="right:170.5px;top:16px;letter-spacing:0.05px">1,183&nbsp;&nbsp;mBar</span>
<span class="abs ms" style="left:399.5px;top:5px">+594ms</span>
<span class="abs val" style="right:82.5px;top:16px;letter-spacing:0.05px">589&nbsp;&nbsp;mBar</span>
<span class="abs ms" style="left:484.5px;top:5px">+594ms</span>
<span class="abs val" style="right:1.0px;top:16px;letter-spacing:-0.3px">50.1&nbsp;&nbsp;%rF</span>
</div>
<div class="row" style="top:313px">
<svg class="ic" viewBox="0 0 24 24" style="left:7px;top:6px;width:24px;height:24px"><circle cx="12" cy="12" r="11.300" fill="none" stroke="#e6e6e6" stroke-width="1"/><path transform="translate(12 12) scale(1.18) translate(-12 -12.300)" d="M12 4.500c-3 0-5.400 2.400-5.400 5.400 0 4 5.400 9.600 5.400 9.600s5.400-5.600 5.400-9.600c0-3-2.400-5.400-5.400-5.400zm0 7.600a2.200 2.200 0 1 1 0-4.400 2.200 2.200 0 0 1 0 4.400z" fill="#e0e0e0"/></svg>
<span class="abs ts" style="left:38px;top:-1px">31.07.2025 17:10:09</span>
<span class="abs ms" style="left:202.3px;top:5px">+594ms</span>
<span class="abs val" style="right:284.0px;top:16px">17.31&nbsp;&nbsp;°C</span>
<span class="abs ms" style="left:306.0px;top:5px">+594ms</span>
<span class="abs val" style="right:170.5px;top:16px;letter-spacing:0.05px">1,186&nbsp;&nbsp;mBar</span>
<span class="abs ms" style="left:399.5px;top:5px">+594ms</span>
<span class="abs val" style="right:82.5px;top:16px;letter-spacing:0.05px">588&nbsp;&nbsp;mBar</span>
<span class="abs ms" style="left:484.5px;top:5px">+594ms</span>
<span class="abs val" style="right:1.0px;top:16px;letter-spacing:-0.3px">50.1&nbsp;&nbsp;%rF</span>
</div>
<div class="row" style="top:350px">
<svg class="ic" viewBox="0 0 24 24" style="left:7px;top:6px;width:24px;height:24px"><circle cx="12" cy="12" r="11.300" fill="none" stroke="#e6e6e6" stroke-width="1"/><path transform="translate(12 12) scale(1.18) translate(-12 -12.300)" d="M12 4.500c-3 0-5.400 2.400-5.400 5.400 0 4 5.400 9.600 5.400 9.600s5.400-5.600 5.400-9.600c0-3-2.400-5.400-5.400-5.400zm0 7.600a2.200 2.200 0 1 1 0-4.400 2.200 2.200 0 0 1 0 4.400z" fill="#e0e0e0"/></svg>
<span class="abs ts" style="left:38px;top:-1px">31.07.2025 17:10:10</span>
<span class="abs ms" style="left:202.3px;top:5px">+594ms</span>
<span class="abs val" style="right:284.0px;top:16px">17.26&nbsp;&nbsp;°C</span>
<span class="abs ms" style="left:306.0px;top:5px">+594ms</span>
<span class="abs val" style="right:170.5px;top:16px;letter-spacing:0.05px">1,188&nbsp;&nbsp;mBar</span>
<span class="abs ms" style="left:399.5px;top:5px">+594ms</span>
<span class="abs val" style="right:82.5px;top:16px;letter-spacing:0.05px">587&nbsp;&nbsp;mBar</span>
<span class="abs ms" style="left:484.5px;top:5px">+594ms</span>
<span class="abs val" style="right:1.0px;top:16px;letter-spacing:-0.3px">50.2&nbsp;&nbsp;%rF</span>
</div>
<div class="row" style="top:387px">
<svg class="ic" viewBox="0 0 24 24" style="left:7px;top:6px;width:24px;height:24px"><circle cx="12" cy="12" r="11.300" fill="none" stroke="#e6e6e6" stroke-width="1"/><path transform="translate(12 12) scale(1.18) translate(-12 -12.300)" d="M12 4.500c-3 0-5.400 2.400-5.400 5.400 0 4 5.400 9.600 5.400 9.600s5.400-5.600 5.400-9.600c0-3-2.400-5.400-5.400-5.400zm0 7.600a2.200 2.200 0 1 1 0-4.400 2.200 2.200 0 0 1 0 4.400z" fill="#e0e0e0"/></svg>
<span class="abs ts" style="left:38px;top:-1px">31.07.2025 17:10:11</span>
<span class="abs ms" style="left:202.3px;top:5px">+594ms</span>
<span class="abs val" style="right:284.0px;top:16px">17.22&nbsp;&nbsp;°C</span>
<span class="abs ms" style="left:306.0px;top:5px">+594ms</span>
<span class="abs val" style="right:170.5px;top:16px;letter-spacing:0.05px">1,190&nbsp;&nbsp;mBar</span>
<span class="abs ms" style="left:399.5px;top:5px">+594ms</span>
<span class="abs val" style="right:82.5px;top:16px;letter-spacing:0.05px">586&nbsp;&nbsp;mBar</span>
<span class="abs ms" style="left:484.5px;top:5px">+594ms</span>
<span class="abs val" style="right:1.0px;top:16px;letter-spacing:-0.3px">50.2&nbsp;&nbsp;%rF</span>
</div>
<div class="row" style="top:424px">
<svg class="ic" viewBox="0 0 24 24" style="left:7px;top:6px;width:24px;height:24px"><circle cx="12" cy="12" r="11.300" fill="none" stroke="#e6e6e6" stroke-width="1"/><path transform="translate(12 12) scale(1.18) translate(-12 -12.300)" d="M12 4.500c-3 0-5.400 2.400-5.400 5.400 0 4 5.400 9.600 5.400 9.600s5.400-5.600 5.400-9.600c0-3-2.400-5.400-5.400-5.400zm0 7.600a2.200 2.200 0 1 1 0-4.400 2.200 2.200 0 0 1 0 4.400z" fill="#e0e0e0"/></svg>
<span class="abs ts" style="left:38px;top:-1px">31.07.2025 17:10:12</span>
<span class="abs ms" style="left:202.3px;top:5px">+594ms</span>
<span class="abs val" style="right:284.0px;top:16px">17.18&nbsp;&nbsp;°C</span>
<span class="abs ms" style="left:306.0px;top:5px">+594ms</span>
<span class="abs val" style="right:170.5px;top:16px;letter-spacing:0.05px">1,192&nbsp;&nbsp;mBar</span>
<span class="abs ms" style="left:399.5px;top:5px">+594ms</span>
<span class="abs val" style="right:82.5px;top:16px;letter-spacing:0.05px">585&nbsp;&nbsp;mBar</span>
<span class="abs ms" style="left:484.5px;top:5px">+594ms</span>
<span class="abs val" style="right:1.0px;top:16px;letter-spacing:-0.3px">50.3&nbsp;&nbsp;%rF</span>
</div>
<div class="row" style="top:461px">
<svg class="ic" viewBox="0 0 24 24" style="left:7px;top:6px;width:24px;height:24px"><circle cx="12" cy="12" r="11.300" fill="none" stroke="#e6e6e6" stroke-width="1"/><path transform="translate(12 12) scale(1.18) translate(-12 -12.300)" d="M12 4.500c-3 0-5.400 2.400-5.400 5.400 0 4 5.400 9.600 5.400 9.600s5.400-5.600 5.400-9.600c0-3-2.400-5.400-5.400-5.400zm0 7.600a2.200 2.200 0 1 1 0-4.400 2.200 2.200 0 0 1 0 4.400z" fill="#e0e0e0"/></svg>
<span class="abs ts" style="left:38px;top:-1px">31.07.2025 17:10:13</span>
<span class="abs ms" style="left:202.3px;top:5px">+594ms</span>
<span class="abs val" style="right:284.0px;top:16px">17.15&nbsp;&nbsp;°C</span>
<span class="abs ms" style="left:306.0px;top:5px">+594ms</span>
<span class="abs val" style="right:170.5px;top:16px;letter-spacing:0.05px">1,193&nbsp;&nbsp;mBar</span>
<span class="abs ms" style="left:399.5px;top:5px">+594ms</span>
<span class="abs val" style="right:82.5px;top:16px;letter-spacing:0.05px">584&nbsp;&nbsp;mBar</span>
<span class="abs ms" style="left:484.5px;top:5px">+594ms</span>
<span class="abs val" style="right:1.0px;top:16px;letter-spacing:-0.3px">50.3&nbsp;&nbsp;%rF</span>
</div>
<div class="row" style="top:498px">
<svg class="ic" viewBox="0 0 24 24" style="left:7px;top:6px;width:24px;height:24px"><circle cx="12" cy="12" r="11.300" fill="none" stroke="#e6e6e6" stroke-width="1"/><path transform="translate(12 12) scale(1.18) translate(-12 -12.300)" d="M12 4.500c-3 0-5.400 2.400-5.400 5.400 0 4 5.400 9.600 5.400 9.600s5.400-5.600 5.400-9.600c0-3-2.400-5.400-5.400-5.400zm0 7.600a2.200 2.200 0 1 1 0-4.400 2.200 2.200 0 0 1 0 4.400z" fill="#e0e0e0"/></svg>
<span class="abs ts" style="left:38px;top:-1px">31.07.2025 17:10:14</span>
<span class="abs ms" style="left:202.3px;top:5px">+594ms</span>
<span class="abs val" style="right:284.0px;top:16px">17.12&nbsp;&nbsp;°C</span>
<span class="abs ms" style="left:306.0px;top:5px">+594ms</span>
<span class="abs val" style="right:170.5px;top:16px;letter-spacing:0.05px">1,195&nbsp;&nbsp;mBar</span>
<span class="abs ms" style="left:399.5px;top:5px">+594ms</span>
<span class="abs val" style="right:82.5px;top:16px;letter-spacing:0.05px">583&nbsp;&nbsp;mBar</span>
<span class="abs ms" style="left:484.5px;top:5px">+594ms</span>
<span class="abs val" style="right:1.0px;top:16px;letter-spacing:-0.3px">50.3&nbsp;&nbsp;%rF</span>
</div>
<div class="abs" style="left:188.0px;top:0;width:1px;height:521px;background:#757575"></div>
<div class="abs" style="left:283.0px;top:0;width:1px;height:521px;background:#757575"></div>
<div class="abs" style="left:382.0px;top:0;width:1px;height:521px;background:#757575"></div>
<div class="abs" style="left:470.0px;top:0;width:1px;height:521px;background:#757575"></div>
</div>
<div class="abs" style="left:688px;top:343px;width:189px;height:5px;background:#000"></div>
<div class="abs" style="left:877px;top:343px;width:95px;height:5px;background:#d62728"></div>
<div class="abs" style="left:972px;top:343px;width:99px;height:5px;background:#1f77b4"></div>
<div class="abs" style="left:1071px;top:343px;width:88px;height:5px;background:#aec7e8"></div>
<div class="abs" style="left:1159px;top:343px;width:74px;height:5px;background:#98df8a"></div>
<div class="abs" style="left:1234px;top:299px;width:8px;height:569px;border-radius:4px;background:linear-gradient(90deg,#8d8d8d,#a2a2a2 50%,#8d8d8d)"></div>
<div class="abs" style="left:1234px;top:299px;width:8px;height:15px;border-radius:4px;background:#6f6f6f"></div>
<div class="abs" style="left:688px;top:870px;width:544px;height:8px;border-radius:4px;background:linear-gradient(#858585,#a0a0a0 60%,#999)"></div>
<div class="abs" style="left:688px;top:870px;width:348px;height:8px;border-radius:4px;background:#6f6f6f"></div>
</div>
</div>
<div class="grip" style="left:1266px"><i style="top:0px"></i><i style="top:6px"></i><i style="top:12px"></i><i style="top:18px"></i><i style="top:24px"></i></div>
<div class="card" id="c3" style="left:1273px;width:613px">
<div class="hd"><svg class="ic" viewBox="0 0 24 24" style="width:25px;height:25px;color:#151515;left:19.800px;top:12.100px" fill="currentColor"><path d="M4 19v-2h2v-7q0-2.075 1.250-3.688T10.500 4.200V3.500q0-.625.438-1.062T12 2q.625 0 1.063.438T13.500 3.500v.700q2 .500 3.250 2.113T18 10v7h2v2H4Zm8 3q-.825 0-1.412-.587T10 20h4q0 .825-.587 1.413T12 22Zm-4-5h8v-7q0-1.650-1.175-2.825T12 6q-1.650 0-2.825 1.175T8 10v7Zm3-4h2V8h-2v5Zm1 3q.425 0 .713-.288T13 15q0-.425-.288-.713T12 14q-.425 0-.713.288T11 15q0 .425.288.713T12 16Z"/></svg><span class="ttl" style="left:60px">Events</span><span class="cnt" style="left:133px">0 / 0</span><svg class="ic" viewBox="0 0 24 24" style="width:24px;height:24px;color:#212121;left:561px;top:13px" fill="currentColor"><path d="M14.15 5.76L13.76 2.97L10.24 2.97L9.85 5.76L7.67 7.02L5.06 5.96L3.30 9.00L5.52 10.74L5.52 13.26L3.30 15.00L5.06 18.04L7.67 16.98L9.85 18.24L10.24 21.03L13.76 21.03L14.15 18.24L16.33 16.98L18.94 18.04L20.70 15.00L18.48 13.26L18.48 10.74L20.70 9.00L18.94 5.96L16.33 7.02Z" fill="none" stroke="currentColor" stroke-width="2" stroke-linejoin="round"/><circle cx="12" cy="12" r="3.500"/></svg></div>
<div class="pg" style="left:-1273px;top:-171px">
<div class="abs" style="left:1293px;top:244px;width:34px;height:35px;border:1px solid #e2e2e2;border-radius:4px;background:#fdfdfd"><svg class="ic" viewBox="0 0 24 24" style="width:22px;height:22px;color:#212121;left:5px;top:5.500px" fill="currentColor"><path d="M3.5 18.490l6-6.010 4 4L22 6.920l-1.410-1.410-7.090 7.970-4-4L2 16.990z"/></svg></div>
<div class="abs" style="left:1336px;top:245px;width:131px;height:33px;border-radius:4px;background:#213166;overflow:hidden">
<i class="abs" style="left:32.2px;top:0;width:1px;height:33px;background:#c9ccd8"></i>
<i class="abs" style="left:65.2px;top:0;width:1px;height:33px;background:#c9ccd8"></i>
<i class="abs" style="left:98.2px;top:0;width:1px;height:33px;background:#c9ccd8"></i>
<svg class="ic" viewBox="0 0 33 33" style="left:0;top:0;width:33px;height:33px"><rect x="3.800" y="4.700" width="24.400" height="24.400" rx="3" fill="#fff"/><path d="M16 7.800c-3.700 0-5.600 2.800-5.600 6.400 0 3.600-1 5.900-2.400 8.200h16c-1.400-2.300-2.400-4.600-2.400-8.200 0-3.600-1.900-6.400-5.600-6.400zM13.800 23.800h4.400l-2.200 1.900z" fill="#213166"/><path d="M8.600 9.600c-1.600 2.400-2 5.300-1.200 8.200M23.400 9.600c1.600 2.400 2 5.300 1.200 8.200M6.600 9c-1.800 2.900-2.200 6.300-1.200 9.400M25.400 9c1.800 2.900 2.200 6.300 1.200 9.400" stroke="#213166" stroke-width="1.100" fill="none"/></svg>
<svg class="ic" viewBox="0 0 33 33" style="left:33px;top:0;width:33px;height:33px"><path d="M4 17.500c1.200 0 1.600 6.500 2.800 6.500 1.600 0 2.400-17.500 4.200-17.500 1.200 0 1.700 6 2.300 9.500" stroke="#fff" stroke-width="1.600" fill="none" stroke-linecap="round"/><circle cx="18.500" cy="18" r="5" fill="none" stroke="#fff" stroke-width="1.900"/><path d="M22.300 22l4.700 4.900" stroke="#fff" stroke-width="3.200" stroke-linecap="round"/><path d="M15.800 18.600c0.900-1.600 1.800-1.600 2.700-0.600s1.800 1 2.700-0.600" stroke="#fff" stroke-width="1.400" fill="none"/><path d="M26 18h1.800" stroke="#fff" stroke-width="1.400"/></svg>
<svg class="ic" viewBox="0 0 33 33" style="left:66px;top:0;width:33px;height:33px"><path d="M16 7.300l10.900 19.600h-21.800z" fill="#fff" stroke="#fff" stroke-width="2.200" stroke-linejoin="round"/><path d="M17.800 11.100l-5.400 8.400h3l-1.800 6.600 6.600-8.400h-3.400z" fill="#213166"/></svg>
<svg class="ic" viewBox="0 0 33 33" style="left:99px;top:0;width:33px;height:33px"><path d="M16 7.300l10.900 19.600h-21.800z" fill="#fff" stroke="#fff" stroke-width="2.200" stroke-linejoin="round"/><path d="M13.900 10h4.400l-0.900 10.700h-2.600z" fill="#213166"/><circle cx="16.100" cy="23.700" r="2.200" fill="#213166"/></svg>
</div>
<div class="abs" style="left:1476px;top:242px;width:390px;height:37px;background:#f5f5f5;border-radius:4px 4px 0 0;border-bottom:1px solid #8c8c8c">
<svg class="ic" viewBox="0 0 26 37" style="left:0;top:0;width:26px;height:37px"><path d="M10.500 12L19.100 12.100 21 15.300 19.900 21.300 10.500 31 1.300 21.800z" fill="#111"/><path d="M4.200 21.800L12.300 14.700M6.300 23.900L15.200 16.800M8.600 26.200L17.500 19.500M10.800 28.200L17.300 23" stroke="#f5f5f5" stroke-width="0.900" stroke-dasharray="2.600 0.900" fill="none"/><circle cx="17" cy="15.300" r="0.900" fill="#ccc"/><path d="M15.800 11.600a3.300 3 0 1 1 4.200 3.800" fill="none" stroke="#111" stroke-width="1"/></svg>
<span class="abs" style="left:28px;top:0;height:37px;line-height:38px;font-size:11.500px;color:#666;letter-spacing:0.150px">Keywords</span>
<svg class="ic" viewBox="0 0 24 24" style="width:24px;height:24px;color:#6d6d6d;left:357px;top:7px" fill="currentColor"><path d="M7 10l5 5 5-5z"/></svg>
</div>
<div class="abs" style="left:1293px;top:287px;width:573px;height:36px;background:#f5f5f5;border-radius:4px 4px 0 0;border-bottom:1px solid #8c8c8c"><span class="abs" style="left:16px;top:0;height:36px;line-height:37px;font-size:14px;color:#666;letter-spacing:0.150px;white-space:nowrap">Full text search</span></div>
<span class="abs th14" style="left:1300px;top:341.500px;letter-spacing:-0.250px">Time</span>
<span class="abs th14" style="left:1347px;top:341.500px;letter-spacing:-0.250px">Event</span>
<span class="abs th14" style="left:1587px;top:341.500px;letter-spacing:-0.250px">Reference</span>
<span class="abs th14" style="left:1674px;top:341.500px;letter-spacing:-0.250px">Module</span>
<span class="abs th14" style="left:1739px;top:341.500px;letter-spacing:-0.250px">Keywords</span>
<div class="abs" style="left:1293px;top:365px;width:47px;height:5px;background:#000"></div>
<div class="abs" style="left:1340px;top:365px;width:240px;height:5px;background:#2196f3"></div>
<div class="abs" style="left:1580px;top:365px;width:153px;height:5px;background:#003f7f"></div>
<div class="abs" style="left:1733px;top:365px;width:83px;height:5px;background:#616161"></div>
<div class="abs" style="left:1816px;top:365px;width:50px;height:5px;background:#000"></div>
</div>
</div>

</div>
</body></html>
